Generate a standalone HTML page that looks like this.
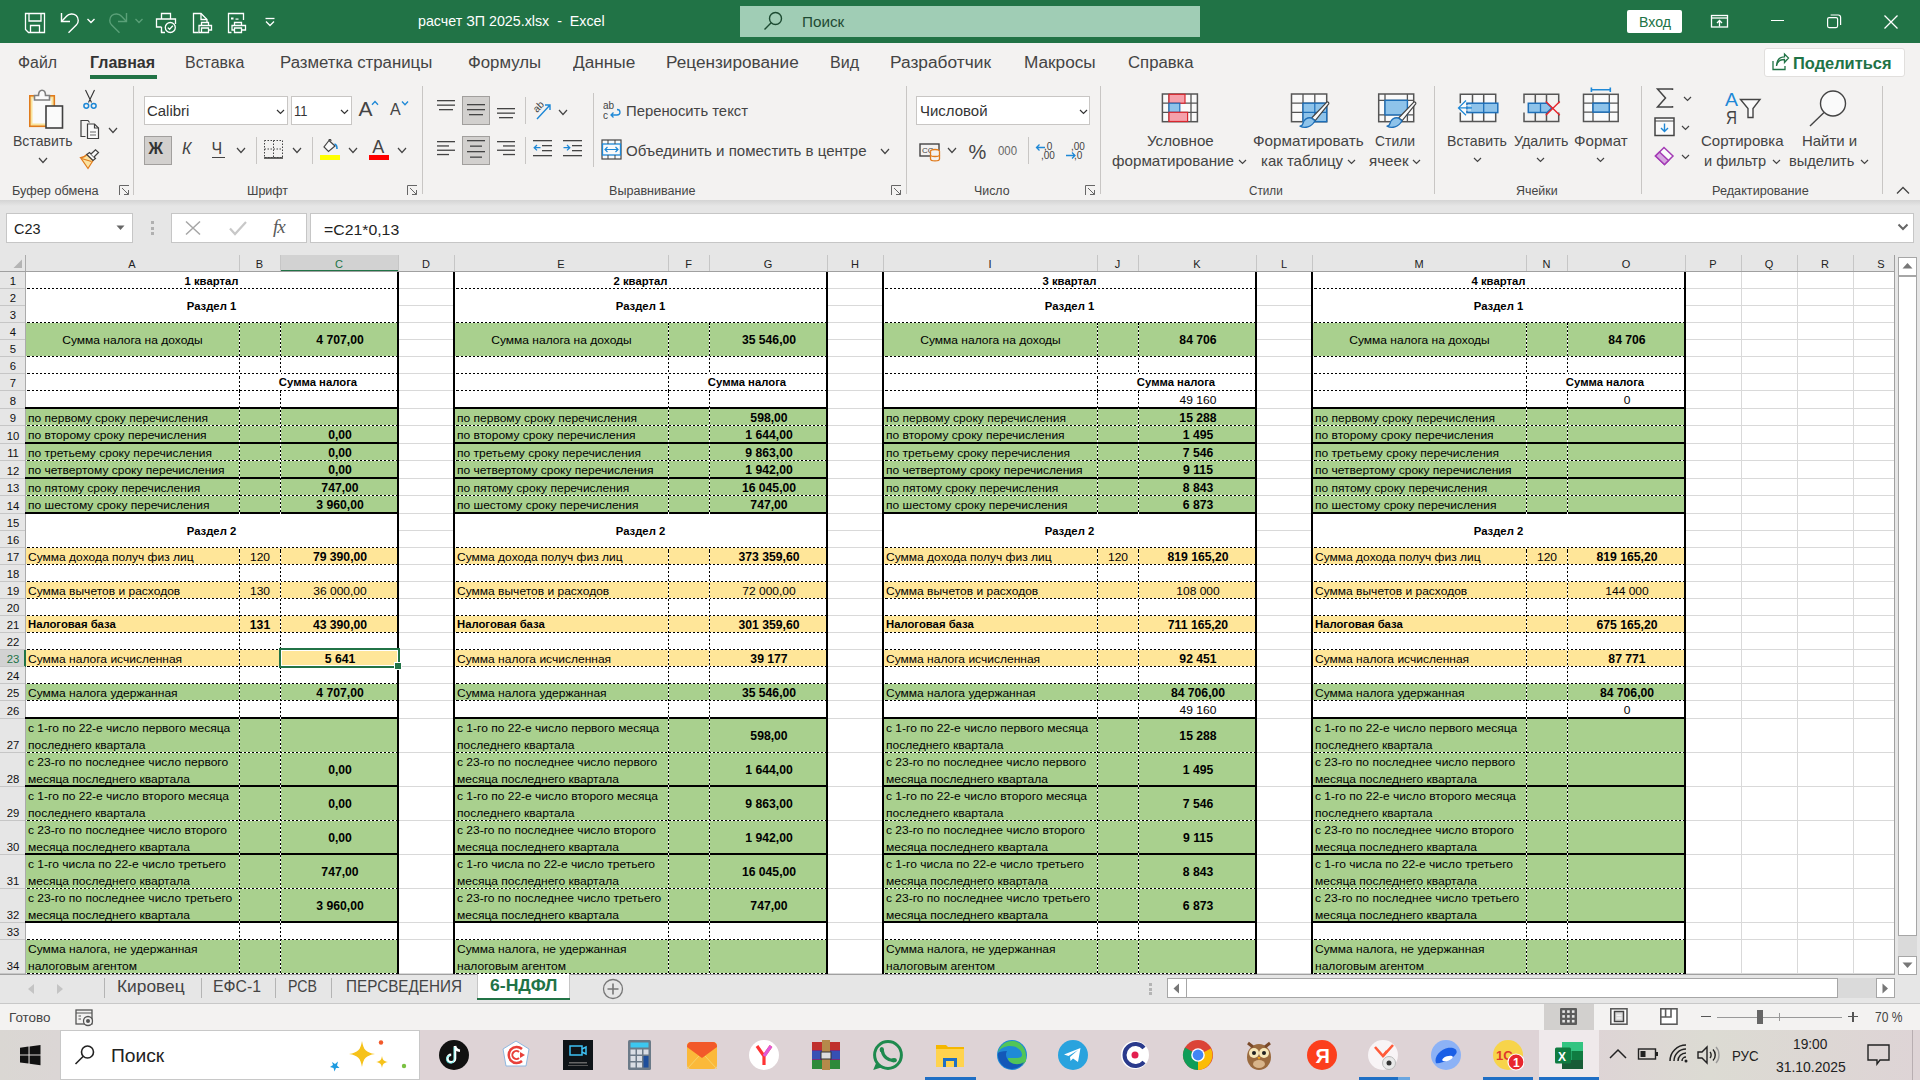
<!DOCTYPE html><html><head><meta charset="utf-8"><style>html,body{margin:0;padding:0;width:1920px;height:1080px;overflow:hidden;background:#e6e6e6;}body{font-family:"Liberation Sans", sans-serif;position:relative;}div,svg{position:absolute;box-sizing:border-box;}.dh{background:repeating-linear-gradient(90deg,#000 0 2px,#fff 2px 4px);background-position:2px 0;}.dv{background:repeating-linear-gradient(180deg,#000 0 2px,#fff 2px 4px);background-position:0 3px;}</style></head><body><div style="left:0px;top:0px;width:1920px;height:43px;background:#217346;"></div><svg style="left:24px;top:12px;" width="22" height="22" viewBox="0 0 22 22"><g fill="none" stroke="#fff" stroke-width="1.3"><path d="M1.5 1.5 H20.5 V20.5 H4.5 L1.5 17.5 Z"/><path d="M5 1.5 V9 H17 V1.5"/><path d="M6.5 20.5 V13.5 H15.5 V20.5"/></g></svg><svg style="left:58px;top:11px;" width="24" height="24" viewBox="0 0 24 24"><g fill="none" stroke="#fff" stroke-width="1.4"><path d="M3.5 2 V10.5 H12"/><path d="M3.8 10.2 L8.5 5.2 C11 2.5 15.5 2.2 18.2 4.6 C21 7.2 20.8 11.6 18.3 14.1 L10.5 21.8"/></g></svg><svg style="left:86px;top:17px;" width="10" height="8" viewBox="0 0 10 8"><path d="M1.5 2 L5 5.5 L8.5 2" fill="none" stroke="#fff" stroke-width="1.4"/></svg><svg style="left:106px;top:11px;" width="24" height="24" viewBox="0 0 24 24"><g fill="none" stroke="#5aa078" stroke-width="1.4"><path d="M20.5 2 V10.5 H12"/><path d="M20.2 10.2 L15.5 5.2 C13 2.5 8.5 2.2 5.8 4.6 C3 7.2 3.2 11.6 5.7 14.1 L13.5 21.8"/></g></svg><svg style="left:134px;top:17px;" width="10" height="8" viewBox="0 0 10 8"><path d="M1.5 2 L5 5.5 L8.5 2" fill="none" stroke="#5aa078" stroke-width="1.4"/></svg><svg style="left:154px;top:11px;" width="24" height="24" viewBox="0 0 24 24"><g fill="none" stroke="#fff" stroke-width="1.3"><path d="M7.5 8 V2.5 H16.5 V8"/><path d="M7.5 21.5 V19 M7.5 16 H2.5 V8 H21.5 V13"/><path d="M7.5 16 V21.5 H11"/><circle cx="16.3" cy="16.5" r="5"/><path d="M13.8 16.6 L15.6 18.3 L18.8 14.8"/></g></svg><svg style="left:191px;top:11px;" width="24" height="24" viewBox="0 0 24 24"><g fill="none" stroke="#fff" stroke-width="1.3"><path d="M7.5 21.5 H2.5 V2.5 H10 L16 8.5 V11"/><path d="M10 2.5 V8.5 H16"/><path d="M10.5 14.5 V11.5 H17.5 V14.5 M10.5 21.5 H8 V14.5 H20.5 V19 H17.5 M10.5 17 V21.5 H17.5 V17 Z"/></g></svg><svg style="left:226px;top:11px;" width="24" height="24" viewBox="0 0 24 24"><g fill="none" stroke="#fff" stroke-width="1.3"><path d="M5.5 21.5 H2.5 V2.5 H17.5 V9"/><rect x="5" y="6.5" width="2.5" height="2" fill="#fff" stroke="none"/><rect x="9.5" y="7.5" width="3" height="1.2" fill="#fff" stroke="none"/><path d="M8.5 14.5 V11.5 H15.5 V14.5 M8.5 19 H6 V14.5 H19.5 V19 H16 M8.5 17 V21.5 H15.5 V17 Z"/></g></svg><svg style="left:263px;top:14px;" width="14" height="14" viewBox="0 0 14 14"><g fill="none" stroke="#fff" stroke-width="1.3"><path d="M2.5 4.5 H11.5"/><path d="M3 7.5 L7 11.5 L11 7.5"/></g></svg><div style="left:418.3px;top:12.80px;font-size:15px;line-height:15px;font-weight:400;color:#fff;white-space:pre;transform:scaleX(0.9504);transform-origin:left;">расчет ЗП 2025.xlsx  -  Excel</div><div style="left:740px;top:6px;width:460px;height:31px;background:#a0cdb5;"></div><svg style="left:760px;top:9px;" width="26" height="26" viewBox="0 0 26 26"><g fill="none" stroke="#1d4b32" stroke-width="1.4"><circle cx="15.5" cy="9.5" r="6"/><path d="M11.2 13.8 L4.5 20.5"/></g></svg><div style="left:801.7px;top:14.30px;font-size:15px;line-height:15px;font-weight:400;color:#1f4a33;white-space:pre;transform:scaleX(1.0174);transform-origin:left;">Поиск</div><div style="left:1627px;top:10px;width:55px;height:23px;background:#fff;border-radius:2px;"></div><div style="left:1638.8px;top:13.90px;font-size:15px;line-height:15px;font-weight:400;color:#217346;white-space:pre;transform:scaleX(0.9429);transform-origin:left;">Вход</div><svg style="left:1709px;top:13px;" width="22" height="16" viewBox="0 0 22 16"><g fill="none" stroke="#fff" stroke-width="1.3"><rect x="2.5" y="2.5" width="16" height="11.5"/><path d="M2.5 5 H18.5"/><path d="M10.5 13.5 V7.5 M8 10 L10.5 7.5 L13 10"/></g></svg><div style="left:1771px;top:19.5px;width:12.5px;height:1.3px;background:#fff;"></div><svg style="left:1825px;top:12px;" width="18" height="18" viewBox="0 0 18 18"><g fill="none" stroke="#fff" stroke-width="1.2"><rect x="2.6" y="5.6" width="10" height="10" rx="1.5"/><path d="M5.6 3 H13.2 C14.6 3 15.6 4 15.6 5.4 V13"/></g></svg><svg style="left:1882px;top:13px;" width="18" height="18" viewBox="0 0 18 18"><g fill="none" stroke="#fff" stroke-width="1.3"><path d="M2.5 2.5 L15.5 15.5 M15.5 2.5 L2.5 15.5"/></g></svg><div style="left:0px;top:43px;width:1920px;height:157px;background:#f3f2f1;"></div><div style="left:18.3px;top:55.46px;font-size:16px;line-height:16px;font-weight:400;color:#444;white-space:pre;transform:scaleX(0.9913);transform-origin:left;">Файл</div><div style="left:90px;top:55.46px;font-size:16px;line-height:16px;font-weight:700;color:#333;white-space:pre;transform:scaleX(0.9988);transform-origin:left;">Главная</div><div style="left:185px;top:55.46px;font-size:16px;line-height:16px;font-weight:400;color:#444;white-space:pre;transform:scaleX(0.9972);transform-origin:left;">Вставка</div><div style="left:280px;top:55.46px;font-size:16px;line-height:16px;font-weight:400;color:#444;white-space:pre;transform:scaleX(1.0492);transform-origin:left;">Разметка страницы</div><div style="left:467.7px;top:55.46px;font-size:16px;line-height:16px;font-weight:400;color:#444;white-space:pre;transform:scaleX(1.0485);transform-origin:left;">Формулы</div><div style="left:572.7px;top:55.46px;font-size:16px;line-height:16px;font-weight:400;color:#444;white-space:pre;transform:scaleX(1.0776);transform-origin:left;">Данные</div><div style="left:666px;top:55.46px;font-size:16px;line-height:16px;font-weight:400;color:#444;white-space:pre;transform:scaleX(1.0741);transform-origin:left;">Рецензирование</div><div style="left:830px;top:55.46px;font-size:16px;line-height:16px;font-weight:400;color:#444;white-space:pre;transform:scaleX(1.0016);transform-origin:left;">Вид</div><div style="left:890px;top:55.46px;font-size:16px;line-height:16px;font-weight:400;color:#444;white-space:pre;transform:scaleX(1.0824);transform-origin:left;">Разработчик</div><div style="left:1024px;top:55.46px;font-size:16px;line-height:16px;font-weight:400;color:#444;white-space:pre;transform:scaleX(1.0749);transform-origin:left;">Макросы</div><div style="left:1127.7px;top:55.46px;font-size:16px;line-height:16px;font-weight:400;color:#444;white-space:pre;transform:scaleX(1.0452);transform-origin:left;">Справка</div><div style="left:90px;top:75px;width:67px;height:4px;background:#217346;"></div><div style="left:1764px;top:48px;width:141px;height:29px;background:#fff;border:1px solid #e1dfdd;border-radius:3px;"></div><svg style="left:1770px;top:52px;" width="20" height="20" viewBox="0 0 20 20"><g fill="none" stroke="#217346" stroke-width="1.3"><path d="M3 9 V17.5 H15 V14"/><path d="M6.5 14 C7 9.5 10 7.5 14.5 7.5 V10.5 L18.5 6 L14.5 2 V4.8 C9 4.8 6.8 8.5 6.5 14"/></g></svg><div style="left:1793.4px;top:54.53px;font-size:16.5px;line-height:16.5px;font-weight:700;color:#217346;white-space:pre;transform:scaleX(0.9956);transform-origin:left;">Поделиться</div><div style="left:133px;top:86px;width:1px;height:109px;background:#c8c6c4;"></div><div style="left:422px;top:86px;width:1px;height:108px;background:#c8c6c4;"></div><div style="left:905.5px;top:86px;width:1px;height:108px;background:#c8c6c4;"></div><div style="left:1099.5px;top:86px;width:1px;height:108px;background:#c8c6c4;"></div><div style="left:1434px;top:86px;width:1px;height:108px;background:#c8c6c4;"></div><div style="left:1641px;top:86px;width:1px;height:108px;background:#c8c6c4;"></div><div style="left:1881.5px;top:86px;width:1px;height:108px;background:#c8c6c4;"></div><div style="left:12px;top:185.42px;font-size:12.5px;line-height:12.5px;font-weight:400;color:#444;white-space:pre;transform:scaleX(1.0184);transform-origin:left;">Буфер обмена</div><svg style="left:119px;top:185px;" width="11" height="11" viewBox="0 0 11 11"><g fill="none" stroke="#666" stroke-width="1"><path d="M0.5 10 V0.5 H10"/><path d="M3 3 L9.5 9.5 M5 9.5 H9.5 V5"/></g></svg><div style="left:246.8px;top:185.42px;font-size:12.5px;line-height:12.5px;font-weight:400;color:#444;white-space:pre;transform:scaleX(0.9966);transform-origin:left;">Шрифт</div><svg style="left:407px;top:185px;" width="11" height="11" viewBox="0 0 11 11"><g fill="none" stroke="#666" stroke-width="1"><path d="M0.5 10 V0.5 H10"/><path d="M3 3 L9.5 9.5 M5 9.5 H9.5 V5"/></g></svg><div style="left:609px;top:185.42px;font-size:12.5px;line-height:12.5px;font-weight:400;color:#444;white-space:pre;transform:scaleX(1.0064);transform-origin:left;">Выравнивание</div><svg style="left:891px;top:185px;" width="11" height="11" viewBox="0 0 11 11"><g fill="none" stroke="#666" stroke-width="1"><path d="M0.5 10 V0.5 H10"/><path d="M3 3 L9.5 9.5 M5 9.5 H9.5 V5"/></g></svg><div style="left:973.7px;top:185.42px;font-size:12.5px;line-height:12.5px;font-weight:400;color:#444;white-space:pre;transform:scaleX(0.9902);transform-origin:left;">Число</div><svg style="left:1085px;top:185px;" width="11" height="11" viewBox="0 0 11 11"><g fill="none" stroke="#666" stroke-width="1"><path d="M0.5 10 V0.5 H10"/><path d="M3 3 L9.5 9.5 M5 9.5 H9.5 V5"/></g></svg><div style="left:1249px;top:185.42px;font-size:12.5px;line-height:12.5px;font-weight:400;color:#444;white-space:pre;transform:scaleX(0.9357);transform-origin:left;">Стили</div><div style="left:1516px;top:185.42px;font-size:12.5px;line-height:12.5px;font-weight:400;color:#444;white-space:pre;transform:scaleX(0.9920);transform-origin:left;">Ячейки</div><div style="left:1712px;top:185.42px;font-size:12.5px;line-height:12.5px;font-weight:400;color:#444;white-space:pre;transform:scaleX(1.0154);transform-origin:left;">Редактирование</div><svg style="left:1896px;top:186px;" width="14" height="9" viewBox="0 0 14 9"><path d="M1 7.5 L7 1.5 L13 7.5" fill="none" stroke="#444" stroke-width="1.3"/></svg><svg style="left:28px;top:89px;" width="36" height="40" viewBox="0 0 36 40"><g stroke-width="1.6"><rect x="1.8" y="6.8" width="24.5" height="30.5" fill="#f9e39b" stroke="#e07b1c"/><rect x="4.5" y="9.5" width="19" height="25" fill="#fafafa" stroke="none"/><path d="M6.5 11 V6.5 H10.5 C10.5 3 12 1.3 14 1.3 C16 1.3 17.5 3 17.5 6.5 H21.5 V11 Z" fill="#fafafa" stroke="#7f7f7f"/><rect x="18" y="17" width="16.5" height="22" fill="#fafafa" stroke="#404040"/></g></svg><div style="left:13px;top:133.10px;font-size:15px;line-height:15px;font-weight:400;color:#444;white-space:pre;transform:scaleX(0.9356);transform-origin:left;">Вставить</div><svg style="left:37.7px;top:156.5px;" width="10" height="7" viewBox="0 0 10 7"><path d="M1 1 L5.0 5.5 L9 1" fill="none" stroke="#444" stroke-width="1.2"/></svg><svg style="left:82px;top:89px;" width="16" height="22" viewBox="0 0 16 22"><g fill="none" stroke-width="1.1"><path d="M3.5 1 L9.5 13.5 M12.5 1 L6.5 13.5" stroke="#333"/><circle cx="4.3" cy="16.8" r="2.4" stroke="#1e88d6" stroke-width="1.5"/><circle cx="11.7" cy="16.8" r="2.4" stroke="#1e88d6" stroke-width="1.5"/></g></svg><svg style="left:79px;top:119px;" width="22" height="22" viewBox="0 0 22 22"><g fill="none" stroke="#404040" stroke-width="1.2"><path d="M6.5 17.5 H2 V1.5 H9 L10.5 3.5"/><path d="M8.5 19.5 V5 H15.5 L19.5 9 V19.5 Z" fill="#fafafa"/><path d="M15.5 5 V9 H19.5"/><path d="M11 13 H17 M11 16 H17" stroke="#666"/></g></svg><svg style="left:107.7px;top:127.30000000000001px;" width="10" height="7" viewBox="0 0 10 7"><path d="M1 1 L5.0 5.5 L9 1" fill="none" stroke="#444" stroke-width="1.2"/></svg><svg style="left:79px;top:149px;" width="22" height="21" viewBox="0 0 22 21"><g stroke-width="1.2"><path d="M1.5 8.5 C4 8.5 6.5 7 7.8 5.5 L14 11.5 L9 19.5 Z" fill="#fbe3a1" stroke="#e07b1c"/><path d="M2.5 9.5 L12.5 12.5" stroke="#e07b1c"/><path d="M7.8 5.5 L10.5 3.5 L16.5 9.5 L14 11.5 Z" fill="#fafafa" stroke="#404040"/><path d="M12 5 L16.5 0.8 L19.5 3.5 L15 8" fill="#fafafa" stroke="#404040"/></g></svg><div style="left:144px;top:96px;width:144px;height:29px;background:#fff;border:1px solid #c8c6c4;"></div><div style="left:147.3px;top:102.88px;font-size:15.5px;line-height:15.5px;font-weight:400;color:#333;white-space:pre;transform:scaleX(0.9627);transform-origin:left;">Calibri</div><svg style="left:276px;top:108.5px;" width="9" height="6" viewBox="0 0 9 6"><path d="M1 1 L4.5 4.5 L8 1" fill="none" stroke="#333" stroke-width="1.2"/></svg><div style="left:290.5px;top:96px;width:61.5px;height:29px;background:#fff;border:1px solid #c8c6c4;"></div><div style="left:294.3px;top:102.88px;font-size:15.5px;line-height:15.5px;font-weight:400;color:#333;white-space:pre;transform:scaleX(0.8326);transform-origin:left;">11</div><svg style="left:340px;top:108.5px;" width="9" height="6" viewBox="0 0 9 6"><path d="M1 1 L4.5 4.5 L8 1" fill="none" stroke="#333" stroke-width="1.2"/></svg><div style="left:358.5px;top:98.22px;font-size:21px;line-height:21px;font-weight:400;color:#444;white-space:pre;">A</div><svg style="left:371px;top:100px;" width="8" height="6" viewBox="0 0 8 6"><path d="M1 4.8 L4 1.5 L7 4.8" fill="none" stroke="#1e88d6" stroke-width="1.3"/></svg><div style="left:390px;top:102.46px;font-size:16px;line-height:16px;font-weight:400;color:#444;white-space:pre;">A</div><svg style="left:401px;top:100px;" width="8" height="6" viewBox="0 0 8 6"><path d="M1 1.5 L4 4.8 L7 1.5" fill="none" stroke="#1e88d6" stroke-width="1.3"/></svg><div style="left:144px;top:136px;width:28px;height:29px;background:#d2d0ce;border:1px solid #a19f9d;"></div><div style="left:148.5px;top:140.96px;font-size:16px;line-height:16px;font-weight:700;color:#333;white-space:pre;">Ж</div><div style="left:182px;top:140.96px;font-size:16px;line-height:16px;font-weight:400;color:#444;white-space:pre;font-style:italic;">К</div><div style="left:211.5px;top:140.96px;font-size:16px;line-height:16px;font-weight:400;color:#444;white-space:pre;">Ч</div><div style="left:211.5px;top:156.5px;width:13px;height:1.3px;background:#444;"></div><svg style="left:236px;top:147.3px;" width="10" height="7" viewBox="0 0 10 7"><path d="M1 1 L5.0 5.5 L9 1" fill="none" stroke="#444" stroke-width="1.2"/></svg><div style="left:255.5px;top:137px;width:1px;height:27px;background:#c8c6c4;"></div><svg style="left:263px;top:139px;" width="21" height="21" viewBox="0 0 21 21"><g fill="none" stroke="#444" stroke-width="1" stroke-dasharray="1.5 1.5"><rect x="1.5" y="1.5" width="18" height="17"/><path d="M10.5 1.5 V18 M1.5 10 H19.5"/></g><path d="M1 19 H20" stroke="#444" stroke-width="1.6"/></svg><svg style="left:291.8px;top:147.3px;" width="10" height="7" viewBox="0 0 10 7"><path d="M1 1 L5.0 5.5 L9 1" fill="none" stroke="#444" stroke-width="1.2"/></svg><div style="left:311.5px;top:137px;width:1px;height:27px;background:#c8c6c4;"></div><svg style="left:320px;top:139px;" width="21" height="16" viewBox="0 0 21 16"><g fill="none" stroke="#444" stroke-width="1.2"><path d="M9 1.5 L4 8 L8.5 12.5 L15 7 Z" fill="#fafafa"/><path d="M9 1.5 C9 0 11 0 11 2"/></g><path d="M14.5 5 C16.5 5.5 17 7.5 17 10" fill="none" stroke="#1e88d6" stroke-width="1.6"/></svg><div style="left:319.8px;top:155px;width:20px;height:5px;background:#ffff00;"></div><svg style="left:347.8px;top:147.3px;" width="10" height="7" viewBox="0 0 10 7"><path d="M1 1 L5.0 5.5 L9 1" fill="none" stroke="#444" stroke-width="1.2"/></svg><div style="left:372.3px;top:138.46px;font-size:18px;line-height:18px;font-weight:400;color:#444;white-space:pre;">A</div><div style="left:369px;top:155px;width:20px;height:5px;background:#ff0000;"></div><svg style="left:396.8px;top:147.3px;" width="10" height="7" viewBox="0 0 10 7"><path d="M1 1 L5.0 5.5 L9 1" fill="none" stroke="#444" stroke-width="1.2"/></svg><div style="left:462px;top:96px;width:28px;height:29px;background:#d2d0ce;border:1px solid #a19f9d;"></div><div style="left:462px;top:136px;width:28px;height:29px;background:#d2d0ce;border:1px solid #a19f9d;"></div><svg style="left:437px;top:100px;" width="18" height="13.5" viewBox="0 0 18 13.5"><rect x="0.0" y="0.0" width="18" height="1.3" fill="#444"/><rect x="0.0" y="4.5" width="18" height="1.3" fill="#444"/><rect x="2.0" y="9.0" width="14" height="1.3" fill="#444"/></svg><svg style="left:467px;top:104px;" width="18" height="15" viewBox="0 0 18 15"><rect x="0.0" y="0" width="18" height="1.3" fill="#444"/><rect x="0.0" y="5" width="18" height="1.3" fill="#444"/><rect x="2.0" y="10" width="14" height="1.3" fill="#444"/></svg><svg style="left:497px;top:108px;" width="18" height="13.5" viewBox="0 0 18 13.5"><rect x="0.0" y="0.0" width="18" height="1.3" fill="#444"/><rect x="0.0" y="4.5" width="18" height="1.3" fill="#444"/><rect x="2.0" y="9.0" width="14" height="1.3" fill="#444"/></svg><div style="left:524.5px;top:97px;width:1px;height:27px;background:#c8c6c4;"></div><svg style="left:531px;top:99px;" width="24" height="22" viewBox="0 0 24 22"><text x="3" y="11" font-size="10" font-family="Liberation Sans" fill="#444" transform="rotate(-45 8 9)">ab</text><path d="M6 20 L19 6 M14 6 H19 V11" fill="none" stroke="#1e88d6" stroke-width="1.4"/></svg><svg style="left:558px;top:109px;" width="10" height="7" viewBox="0 0 10 7"><path d="M1 1 L5.0 5.5 L9 1" fill="none" stroke="#444" stroke-width="1.2"/></svg><div style="left:592.5px;top:93px;width:1px;height:74px;background:#c8c6c4;"></div><svg style="left:603px;top:100px;" width="20" height="21" viewBox="0 0 20 21"><text x="0" y="9" font-size="10" font-family="Liberation Sans" fill="#444">ab</text><text x="0" y="19" font-size="10" font-family="Liberation Sans" fill="#444">c</text><path d="M8 15 H14 C18 15 18 9.5 14 9.5 M10.5 12.5 L8 15 L10.5 17.5" fill="none" stroke="#1e88d6" stroke-width="1.3"/></svg><div style="left:626px;top:103.30px;font-size:15px;line-height:15px;font-weight:400;color:#444;white-space:pre;transform:scaleX(0.9894);transform-origin:left;">Переносить текст</div><svg style="left:437px;top:141px;" width="18" height="17.2" viewBox="0 0 18 17.2"><rect x="0" y="0.0" width="18" height="1.3" fill="#444"/><rect x="0" y="4.3" width="12" height="1.3" fill="#444"/><rect x="0" y="8.6" width="18" height="1.3" fill="#444"/><rect x="0" y="12.899999999999999" width="12" height="1.3" fill="#444"/></svg><svg style="left:467px;top:140px;" width="18" height="22.0" viewBox="0 0 18 22.0"><rect x="0.0" y="0.0" width="18" height="1.3" fill="#444"/><rect x="3.0" y="5.5" width="12" height="1.3" fill="#444"/><rect x="0.0" y="11.0" width="18" height="1.3" fill="#444"/><rect x="3.0" y="16.5" width="12" height="1.3" fill="#444"/></svg><svg style="left:497px;top:141px;" width="18" height="17.2" viewBox="0 0 18 17.2"><rect x="0" y="0.0" width="18" height="1.3" fill="#444"/><rect x="6" y="4.3" width="12" height="1.3" fill="#444"/><rect x="0" y="8.6" width="18" height="1.3" fill="#444"/><rect x="6" y="12.899999999999999" width="12" height="1.3" fill="#444"/></svg><div style="left:524.5px;top:137px;width:1px;height:27px;background:#c8c6c4;"></div><svg style="left:533px;top:139px;" width="20" height="19" viewBox="0 0 20 19"><g fill="#444"><rect x="0" y="1" width="19" height="1.3"/><rect x="9" y="6" width="10" height="1.3"/><rect x="9" y="11" width="10" height="1.3"/><rect x="0" y="16" width="19" height="1.3"/></g><path d="M1.5 8.7 H7.5 M4 6 L1.2 8.7 L4 11.4" fill="none" stroke="#1e88d6" stroke-width="1.3"/></svg><svg style="left:563px;top:139px;" width="20" height="19" viewBox="0 0 20 19"><g fill="#444"><rect x="0" y="1" width="19" height="1.3"/><rect x="9" y="6" width="10" height="1.3"/><rect x="9" y="11" width="10" height="1.3"/><rect x="0" y="16" width="19" height="1.3"/></g><path d="M0.5 8.7 H6.5 M4 6 L6.8 8.7 L4 11.4" fill="none" stroke="#1e88d6" stroke-width="1.3"/></svg><svg style="left:601px;top:139px;" width="21" height="21" viewBox="0 0 21 21"><rect x="1" y="1" width="19" height="19" fill="#fafafa" stroke="#444" stroke-width="1.2"/><rect x="1.5" y="5" width="18" height="11" fill="#fafafa" stroke="#1e88d6" stroke-width="1.3"/><path d="M4 10.5 H17 M6.5 8 L4 10.5 L6.5 13 M14.5 8 L17 10.5 L14.5 13" fill="none" stroke="#1e88d6" stroke-width="1.2"/><path d="M7 1 V5 M14 1 V5 M7 16 V20 M14 16 V20" stroke="#444"/></svg><div style="left:626px;top:143.30px;font-size:15px;line-height:15px;font-weight:400;color:#444;white-space:pre;transform:scaleX(1.0029);transform-origin:left;">Объединить и поместить в центре</div><svg style="left:880px;top:148px;" width="10" height="7" viewBox="0 0 10 7"><path d="M1 1 L5.0 5.5 L9 1" fill="none" stroke="#444" stroke-width="1.2"/></svg><div style="left:916px;top:96px;width:174px;height:29px;background:#fff;border:1px solid #c8c6c4;"></div><div style="left:919.7px;top:102.88px;font-size:15.5px;line-height:15.5px;font-weight:400;color:#333;white-space:pre;transform:scaleX(0.9654);transform-origin:left;">Числовой</div><svg style="left:1079px;top:108.5px;" width="9" height="6" viewBox="0 0 9 6"><path d="M1 1 L4.5 4.5 L8 1" fill="none" stroke="#333" stroke-width="1.2"/></svg><svg style="left:919px;top:142px;" width="24" height="20" viewBox="0 0 24 20"><rect x="1" y="2" width="19" height="12" fill="none" stroke="#444" stroke-width="1.4"/><text x="3" y="11" font-size="8" font-family="Liberation Sans" fill="#444">CC</text><g fill="#f3f2f1" stroke="#e07b1c" stroke-width="1.3"><ellipse cx="16" cy="9.5" rx="4.5" ry="2"/><path d="M11.5 9.5 V17 C11.5 19.5 20.5 19.5 20.5 17 V9.5"/><path d="M11.5 13 C11.5 15 20.5 15 20.5 13"/></g></svg><svg style="left:947px;top:147.3px;" width="10" height="7" viewBox="0 0 10 7"><path d="M1 1 L5.0 5.5 L9 1" fill="none" stroke="#444" stroke-width="1.2"/></svg><div style="left:968.5px;top:142.07px;font-size:20px;line-height:20px;font-weight:400;color:#444;white-space:pre;">%</div><div style="left:998px;top:144.84px;font-size:12px;line-height:12px;font-weight:400;color:#666;white-space:pre;transform:scaleX(0.95);transform-origin:left;">000</div><div style="left:1027.5px;top:137px;width:1px;height:27px;background:#c8c6c4;"></div><svg style="left:1035px;top:141px;" width="22" height="20" viewBox="0 0 22 20"><text x="9" y="9" font-size="10" font-family="Liberation Sans" fill="#444">,0</text><text x="6" y="18" font-size="10" font-family="Liberation Sans" fill="#444">,00</text><path d="M1.5 6.5 H10 M4.5 3.5 L1.5 6.5 L4.5 9.5" fill="none" stroke="#1e88d6" stroke-width="1.3"/></svg><svg style="left:1065px;top:141px;" width="22" height="20" viewBox="0 0 22 20"><text x="6" y="9" font-size="10" font-family="Liberation Sans" fill="#444">,00</text><text x="9" y="18" font-size="10" font-family="Liberation Sans" fill="#444">,0</text><path d="M1 14.5 H10 M7 11.5 L10 14.5 L7 17.5" fill="none" stroke="#1e88d6" stroke-width="1.3"/></svg><svg style="left:1161px;top:93px;" width="38" height="30" viewBox="0 0 38 30"><rect x="1.4" y="1" width="35" height="27.7" fill="#fafafa" stroke="#555" stroke-width="1.5"/><path d="M8 1 V28.7 M30 1 V28.7 M1.4 10.2 H36.4 M1.4 19.3 H36.4" stroke="#555" stroke-width="1.3" fill="none"/><rect x="8" y="1.3" width="16" height="8.9" fill="#f5a0aa" stroke="#d9262e" stroke-width="1.2"/><rect x="8" y="10.2" width="10.8" height="9.1" fill="#8ec3ea" stroke="#1e6fb8" stroke-width="1.2"/><rect x="8" y="19.3" width="18.6" height="9.2" fill="#f5a0aa" stroke="#d9262e" stroke-width="1.2"/></svg><div style="left:1147px;top:133.30px;font-size:15px;line-height:15px;font-weight:400;color:#444;white-space:pre;transform:scaleX(1.0070);transform-origin:left;">Условное</div><div style="left:1112px;top:153.30px;font-size:15px;line-height:15px;font-weight:400;color:#444;white-space:pre;transform:scaleX(1.0130);transform-origin:left;">форматирование</div><svg style="left:1238px;top:159px;" width="9" height="6" viewBox="0 0 9 6"><path d="M1 1 L4.5 4.5 L8 1" fill="none" stroke="#444" stroke-width="1.2"/></svg><svg style="left:1290px;top:92px;" width="42" height="38" viewBox="0 0 42 38"><rect x="1.5" y="2" width="35.2" height="27.7" fill="#fafafa" stroke="#555" stroke-width="1.5"/><path d="M13 2 V29.7 M24.8 2 V29.7 M1.5 11.2 H36.7 M1.5 20.3 H36.7" stroke="#555" stroke-width="1.3"/><rect x="13" y="11.2" width="23.7" height="18.5" fill="#8ec3ea" stroke="#1e6fb8" stroke-width="1.4"/><path d="M24.8 11.2 V29.7 M13 20.3 H36.7" stroke="#1e6fb8" stroke-width="1.2"/><path d="M36.6 10.3 C37.6 9.3 39.5 10.6 38.7 11.9 L25.2 28.6 L21.6 26 Z" fill="#fafafa" stroke="#444" stroke-width="1.2" stroke-linejoin="round"/><path d="M21.4 26 C17.5 25 13.6 27.5 13 31.5 C12.6 33.3 11.4 34 10 34.2 C14.5 36.6 21.5 35.5 25 28.8 Z" fill="#8ec3ea" stroke="#1e6fb8" stroke-width="1.3" stroke-linejoin="round"/></svg><svg style="left:1377px;top:92px;" width="42" height="38" viewBox="0 0 42 38"><rect x="1.7" y="2" width="35" height="27.7" fill="#fafafa" stroke="#555" stroke-width="1.5"/><path d="M8 2 V29.7 M30.4 2 V29.7 M1.7 8.3 H36.7 M1.7 22.9 H36.7" stroke="#555" stroke-width="1.3"/><rect x="8" y="8.3" width="22.4" height="14.6" fill="#8ec3ea" stroke="#1e6fb8" stroke-width="1.4"/><path d="M36.6 10.3 C37.6 9.3 39.5 10.6 38.7 11.9 L25.2 28.6 L21.6 26 Z" fill="#fafafa" stroke="#444" stroke-width="1.2" stroke-linejoin="round"/><path d="M21.4 26 C17.5 25 13.6 27.5 13 31.5 C12.6 33.3 11.4 34 10 34.2 C14.5 36.6 21.5 35.5 25 28.8 Z" fill="#8ec3ea" stroke="#1e6fb8" stroke-width="1.3" stroke-linejoin="round"/></svg><div style="left:1253px;top:133.30px;font-size:15px;line-height:15px;font-weight:400;color:#444;white-space:pre;transform:scaleX(1.0160);transform-origin:left;">Форматировать</div><div style="left:1261px;top:153.30px;font-size:15px;line-height:15px;font-weight:400;color:#444;white-space:pre;transform:scaleX(0.9981);transform-origin:left;">как таблицу</div><svg style="left:1347px;top:159px;" width="9" height="6" viewBox="0 0 9 6"><path d="M1 1 L4.5 4.5 L8 1" fill="none" stroke="#444" stroke-width="1.2"/></svg><div style="left:1375px;top:133.30px;font-size:15px;line-height:15px;font-weight:400;color:#444;white-space:pre;transform:scaleX(0.9255);transform-origin:left;">Стили</div><div style="left:1369px;top:153.30px;font-size:15px;line-height:15px;font-weight:400;color:#444;white-space:pre;transform:scaleX(1.0080);transform-origin:left;">ячеек</div><svg style="left:1412px;top:159px;" width="9" height="6" viewBox="0 0 9 6"><path d="M1 1 L4.5 4.5 L8 1" fill="none" stroke="#444" stroke-width="1.2"/></svg><svg style="left:1456px;top:88px;" width="44" height="36" viewBox="0 0 44 36"><path d="M4.3 15.2 V6.3 H39.7 V33.5 H4.3 V24.6 M16.5 6.3 V33.5 M27.7 6.3 V33.5" fill="#fafafa" stroke="#555" stroke-width="1.5"/><path d="M4.3 6.3 H39.7 V33.5 H4.3 Z" fill="#fafafa" stroke="none" opacity="0"/><rect x="10.9" y="15.2" width="30.9" height="9.4" fill="#8ec3ea" stroke="#1e6fb8" stroke-width="1.5"/><path d="M27.7 15.2 V24.6" stroke="#1e6fb8" stroke-width="1.3"/><path d="M10 12.5 L2.5 19.9 L10 27.3 M2.8 19.9 H16" fill="none" stroke="#1e88d6" stroke-width="1.3"/><path d="M6 17.8 H15 M6 22 H15" stroke="#fafafa" stroke-width="0.9"/></svg><svg style="left:1522px;top:88px;" width="40" height="36" viewBox="0 0 40 36"><path d="M2 15.2 V6.3 H36.7 V15.2 M36.7 24.6 V33.5 H2 V24.6 M13.3 6.3 V33.5 M24.5 6.3 V15.2 M24.5 24.6 V33.5" fill="none" stroke="#555" stroke-width="1.5"/><path d="M6.3 15.2 H25 L30 19.9 L25 24.6 H6.3 Z" fill="#8ec3ea" stroke="#1e6fb8" stroke-width="1.5"/><path d="M18.5 15.2 V24.6" stroke="#1e6fb8" stroke-width="1.3"/><path d="M23.8 13.5 L37.8 27.3 M37.8 13.5 L23.8 27.3" stroke="#e8262d" stroke-width="1.4"/></svg><svg style="left:1581px;top:86px;" width="40" height="38" viewBox="0 0 40 38"><path d="M10 3.8 H29.7 M10.4 1.5 V6 M29.3 1.5 V6" stroke="#1e88d6" stroke-width="1.6"/><rect x="2.5" y="8.3" width="34.7" height="27.2" fill="#fafafa" stroke="#555" stroke-width="1.5"/><path d="M12 8.3 V35.5 M28.3 8.3 V35.5 M2.5 17.2 H37.2 M2.5 26.1 H37.2" stroke="#555" stroke-width="1.3"/><rect x="12" y="17.2" width="16.3" height="8.9" fill="#8ec3ea" stroke="#1e6fb8" stroke-width="1.5"/></svg><div style="left:1447.4px;top:133.30px;font-size:15px;line-height:15px;font-weight:400;color:#444;white-space:pre;transform:scaleX(0.9435);transform-origin:left;">Вставить</div><svg style="left:1473px;top:156.5px;" width="9" height="6" viewBox="0 0 9 6"><path d="M1 1 L4.5 4.5 L8 1" fill="none" stroke="#444" stroke-width="1.2"/></svg><div style="left:1513.5px;top:133.30px;font-size:15px;line-height:15px;font-weight:400;color:#444;white-space:pre;transform:scaleX(0.9514);transform-origin:left;">Удалить</div><svg style="left:1536px;top:156.5px;" width="9" height="6" viewBox="0 0 9 6"><path d="M1 1 L4.5 4.5 L8 1" fill="none" stroke="#444" stroke-width="1.2"/></svg><div style="left:1574px;top:133.30px;font-size:15px;line-height:15px;font-weight:400;color:#444;white-space:pre;transform:scaleX(1.0076);transform-origin:left;">Формат</div><svg style="left:1596px;top:156.5px;" width="9" height="6" viewBox="0 0 9 6"><path d="M1 1 L4.5 4.5 L8 1" fill="none" stroke="#444" stroke-width="1.2"/></svg><svg style="left:1655px;top:87px;" width="20" height="22" viewBox="0 0 20 22"><path d="M17.5 3 V2 H2.5 L10.5 11 L2.5 20 H17.5 V19" fill="none" stroke="#444" stroke-width="1.5" stroke-linejoin="miter"/></svg><svg style="left:1683px;top:95.5px;" width="9" height="6" viewBox="0 0 9 6"><path d="M1 1 L4.5 4.5 L8 1" fill="none" stroke="#444" stroke-width="1.2"/></svg><svg style="left:1654px;top:117px;" width="22" height="20" viewBox="0 0 22 20"><rect x="1" y="1" width="19" height="17.5" fill="#fafafa" stroke="#444" stroke-width="1.5"/><path d="M1 4 H20" stroke="#444" stroke-width="1"/><path d="M10.5 6.5 V14.5 M7 11 L10.5 14.5 L14 11" fill="none" stroke="#1e88d6" stroke-width="1.4"/></svg><svg style="left:1680.5px;top:124.5px;" width="9" height="6" viewBox="0 0 9 6"><path d="M1 1 L4.5 4.5 L8 1" fill="none" stroke="#444" stroke-width="1.2"/></svg><svg style="left:1654px;top:146px;" width="21" height="20" viewBox="0 0 21 20"><path d="M10 1.5 L19 10 L10.5 18.5 L1.5 10 Z" fill="#fafafa" stroke="#a33bb5" stroke-width="1.5"/><path d="M1.5 10 L10.5 18.5 L14.5 14.5 L5.5 6 Z" fill="#d6a6e0" stroke="#a33bb5" stroke-width="1.5"/></svg><svg style="left:1680.5px;top:153.5px;" width="9" height="6" viewBox="0 0 9 6"><path d="M1 1 L4.5 4.5 L8 1" fill="none" stroke="#444" stroke-width="1.2"/></svg><div style="left:1724.5px;top:90.42px;font-size:19px;line-height:19px;font-weight:400;color:#1e88d6;white-space:pre;transform:scaleX(1.0246);transform-origin:left;">A</div><div style="left:1726px;top:108.42px;font-size:19px;line-height:19px;font-weight:400;color:#444;white-space:pre;transform:scaleX(0.8009);transform-origin:left;">Я</div><svg style="left:1739px;top:98px;" width="23" height="22" viewBox="0 0 23 22"><path d="M1.5 1.5 H21 L14 10.5 V19.5 H9 V10.5 Z" fill="#fafafa" stroke="#444" stroke-width="1.4"/></svg><div style="left:1701px;top:133.30px;font-size:15px;line-height:15px;font-weight:400;color:#444;white-space:pre;transform:scaleX(1.0021);transform-origin:left;">Сортировка</div><div style="left:1704px;top:153.30px;font-size:15px;line-height:15px;font-weight:400;color:#444;white-space:pre;transform:scaleX(0.9706);transform-origin:left;">и фильтр</div><svg style="left:1772px;top:159px;" width="9" height="6" viewBox="0 0 9 6"><path d="M1 1 L4.5 4.5 L8 1" fill="none" stroke="#444" stroke-width="1.2"/></svg><svg style="left:1808px;top:88px;" width="40" height="40" viewBox="0 0 40 40"><circle cx="25" cy="15.5" r="12.5" fill="#fafafa" stroke="#444" stroke-width="1.4"/><path d="M16 24.5 L2 38" stroke="#444" stroke-width="1.4"/></svg><div style="left:1801.6px;top:133.30px;font-size:15px;line-height:15px;font-weight:400;color:#444;white-space:pre;transform:scaleX(0.9971);transform-origin:left;">Найти и</div><div style="left:1789px;top:153.30px;font-size:15px;line-height:15px;font-weight:400;color:#444;white-space:pre;transform:scaleX(0.9736);transform-origin:left;">выделить</div><svg style="left:1860px;top:159px;" width="9" height="6" viewBox="0 0 9 6"><path d="M1 1 L4.5 4.5 L8 1" fill="none" stroke="#444" stroke-width="1.2"/></svg><div style="left:0px;top:200px;width:1920px;height:6px;background:linear-gradient(#d4d4d4,#e6e6e6);"></div><div style="left:6px;top:213px;width:127px;height:30px;background:#fff;border:1px solid #c6c6c6;"></div><div style="left:13.5px;top:222.13px;font-size:14.5px;line-height:14.5px;font-weight:400;color:#222;white-space:pre;transform:scaleX(0.9959);transform-origin:left;">C23</div><svg style="left:116px;top:225px;" width="9" height="6" viewBox="0 0 9 6"><path d="M0.5 0.5 H8.5 L4.5 5 Z" fill="#666"/></svg><div style="left:150.5px;top:221px;width:3px;height:3px;background:#b0b0b0;"></div><div style="left:150.5px;top:226.5px;width:3px;height:3px;background:#b0b0b0;"></div><div style="left:150.5px;top:232px;width:3px;height:3px;background:#b0b0b0;"></div><div style="left:170.5px;top:213px;width:136px;height:30px;background:#fff;border:1px solid #c6c6c6;"></div><svg style="left:184px;top:219px;" width="18" height="18" viewBox="0 0 18 18"><path d="M2 2.5 L16 15.5 M16 2.5 L2 15.5" stroke="#a6a6a6" stroke-width="1.5"/></svg><svg style="left:228px;top:220px;" width="20" height="17" viewBox="0 0 20 17"><path d="M2 8.5 L7 14 L18 2" fill="none" stroke="#c8c8c8" stroke-width="2.2"/></svg><div style="left:273px;top:216px;font-family:'Liberation Serif',serif;font-style:italic;font-size:19px;line-height:22px;color:#5a5a5a;letter-spacing:-1px;">fx</div><div style="left:310px;top:213px;width:1604px;height:30px;background:#fff;border:1px solid #c6c6c6;"></div><div style="left:324.4px;top:221.50px;font-size:15px;line-height:15px;font-weight:400;color:#222;white-space:pre;transform:scaleX(1.0545);transform-origin:left;">=C21*0,13</div><svg style="left:1897px;top:223px;" width="12" height="8" viewBox="0 0 12 8"><path d="M1.5 1.5 L6 6 L10.5 1.5" fill="none" stroke="#666" stroke-width="2"/></svg><div style="left:0px;top:255px;width:1895px;height:17px;background:#e6e6e6;"></div><div style="left:0px;top:272px;width:25px;height:702px;background:#e6e6e6;"></div><div style="left:26px;top:272px;width:1869px;height:702px;background:#fff;"></div><div style="left:280px;top:255px;width:118px;height:16px;background:#d2d2d2;"></div><div style="left:280px;top:270px;width:119px;height:2px;background:#217346;"></div><div style="left:25px;top:259.19px;font-size:11px;line-height:11px;font-weight:400;color:#222;white-space:pre;width:214px;text-align:center;">A</div><div style="left:239px;top:255px;width:1px;height:16px;background:#c6c6c6;"></div><div style="left:239px;top:259.19px;font-size:11px;line-height:11px;font-weight:400;color:#222;white-space:pre;width:41px;text-align:center;">B</div><div style="left:280px;top:255px;width:1px;height:16px;background:#c6c6c6;"></div><div style="left:280px;top:259.19px;font-size:11px;line-height:11px;font-weight:400;color:#217346;white-space:pre;width:118px;text-align:center;">C</div><div style="left:398px;top:255px;width:1px;height:16px;background:#c6c6c6;"></div><div style="left:398px;top:259.19px;font-size:11px;line-height:11px;font-weight:400;color:#222;white-space:pre;width:56px;text-align:center;">D</div><div style="left:454px;top:255px;width:1px;height:16px;background:#c6c6c6;"></div><div style="left:454px;top:259.19px;font-size:11px;line-height:11px;font-weight:400;color:#222;white-space:pre;width:214px;text-align:center;">E</div><div style="left:668px;top:255px;width:1px;height:16px;background:#c6c6c6;"></div><div style="left:668px;top:259.19px;font-size:11px;line-height:11px;font-weight:400;color:#222;white-space:pre;width:41px;text-align:center;">F</div><div style="left:709px;top:255px;width:1px;height:16px;background:#c6c6c6;"></div><div style="left:709px;top:259.19px;font-size:11px;line-height:11px;font-weight:400;color:#222;white-space:pre;width:118px;text-align:center;">G</div><div style="left:827px;top:255px;width:1px;height:16px;background:#c6c6c6;"></div><div style="left:827px;top:259.19px;font-size:11px;line-height:11px;font-weight:400;color:#222;white-space:pre;width:56px;text-align:center;">H</div><div style="left:883px;top:255px;width:1px;height:16px;background:#c6c6c6;"></div><div style="left:883px;top:259.19px;font-size:11px;line-height:11px;font-weight:400;color:#222;white-space:pre;width:214px;text-align:center;">I</div><div style="left:1097px;top:255px;width:1px;height:16px;background:#c6c6c6;"></div><div style="left:1097px;top:259.19px;font-size:11px;line-height:11px;font-weight:400;color:#222;white-space:pre;width:41px;text-align:center;">J</div><div style="left:1138px;top:255px;width:1px;height:16px;background:#c6c6c6;"></div><div style="left:1138px;top:259.19px;font-size:11px;line-height:11px;font-weight:400;color:#222;white-space:pre;width:118px;text-align:center;">K</div><div style="left:1256px;top:255px;width:1px;height:16px;background:#c6c6c6;"></div><div style="left:1256px;top:259.19px;font-size:11px;line-height:11px;font-weight:400;color:#222;white-space:pre;width:56px;text-align:center;">L</div><div style="left:1312px;top:255px;width:1px;height:16px;background:#c6c6c6;"></div><div style="left:1312px;top:259.19px;font-size:11px;line-height:11px;font-weight:400;color:#222;white-space:pre;width:214px;text-align:center;">M</div><div style="left:1526px;top:255px;width:1px;height:16px;background:#c6c6c6;"></div><div style="left:1526px;top:259.19px;font-size:11px;line-height:11px;font-weight:400;color:#222;white-space:pre;width:41px;text-align:center;">N</div><div style="left:1567px;top:255px;width:1px;height:16px;background:#c6c6c6;"></div><div style="left:1567px;top:259.19px;font-size:11px;line-height:11px;font-weight:400;color:#222;white-space:pre;width:118px;text-align:center;">O</div><div style="left:1685px;top:255px;width:1px;height:16px;background:#c6c6c6;"></div><div style="left:1685px;top:259.19px;font-size:11px;line-height:11px;font-weight:400;color:#222;white-space:pre;width:56px;text-align:center;">P</div><div style="left:1741px;top:255px;width:1px;height:16px;background:#c6c6c6;"></div><div style="left:1741px;top:259.19px;font-size:11px;line-height:11px;font-weight:400;color:#222;white-space:pre;width:56px;text-align:center;">Q</div><div style="left:1797px;top:255px;width:1px;height:16px;background:#c6c6c6;"></div><div style="left:1797px;top:259.19px;font-size:11px;line-height:11px;font-weight:400;color:#222;white-space:pre;width:56px;text-align:center;">R</div><div style="left:1853px;top:255px;width:1px;height:16px;background:#c6c6c6;"></div><div style="left:1853px;top:259.19px;font-size:11px;line-height:11px;font-weight:400;color:#222;white-space:pre;width:56px;text-align:center;">S</div><svg style="left:13px;top:259px;" width="10" height="10" viewBox="0 0 10 10"><path d="M9 0.5 V9 H0.5 Z" fill="#b4b4b4"/></svg><div style="left:25px;top:255px;width:1px;height:719px;background:#ababab;"></div><div style="left:0px;top:271px;width:1895px;height:1px;background:#a0a0a0;"></div><div style="left:239px;top:272px;width:1px;height:702px;background:#d9d9d9;"></div><div style="left:280px;top:272px;width:1px;height:702px;background:#d9d9d9;"></div><div style="left:398px;top:272px;width:1px;height:702px;background:#d9d9d9;"></div><div style="left:454px;top:272px;width:1px;height:702px;background:#d9d9d9;"></div><div style="left:668px;top:272px;width:1px;height:702px;background:#d9d9d9;"></div><div style="left:709px;top:272px;width:1px;height:702px;background:#d9d9d9;"></div><div style="left:827px;top:272px;width:1px;height:702px;background:#d9d9d9;"></div><div style="left:883px;top:272px;width:1px;height:702px;background:#d9d9d9;"></div><div style="left:1097px;top:272px;width:1px;height:702px;background:#d9d9d9;"></div><div style="left:1138px;top:272px;width:1px;height:702px;background:#d9d9d9;"></div><div style="left:1256px;top:272px;width:1px;height:702px;background:#d9d9d9;"></div><div style="left:1312px;top:272px;width:1px;height:702px;background:#d9d9d9;"></div><div style="left:1526px;top:272px;width:1px;height:702px;background:#d9d9d9;"></div><div style="left:1567px;top:272px;width:1px;height:702px;background:#d9d9d9;"></div><div style="left:1685px;top:272px;width:1px;height:702px;background:#d9d9d9;"></div><div style="left:1741px;top:272px;width:1px;height:702px;background:#d9d9d9;"></div><div style="left:1797px;top:272px;width:1px;height:702px;background:#d9d9d9;"></div><div style="left:1853px;top:272px;width:1px;height:702px;background:#d9d9d9;"></div><div style="left:26px;top:288px;width:1869px;height:1px;background:#d9d9d9;"></div><div style="left:26px;top:305px;width:1869px;height:1px;background:#d9d9d9;"></div><div style="left:26px;top:322px;width:1869px;height:1px;background:#d9d9d9;"></div><div style="left:26px;top:339px;width:1869px;height:1px;background:#d9d9d9;"></div><div style="left:26px;top:356px;width:1869px;height:1px;background:#d9d9d9;"></div><div style="left:26px;top:373px;width:1869px;height:1px;background:#d9d9d9;"></div><div style="left:26px;top:390px;width:1869px;height:1px;background:#d9d9d9;"></div><div style="left:26px;top:408px;width:1869px;height:1px;background:#d9d9d9;"></div><div style="left:26px;top:425px;width:1869px;height:1px;background:#d9d9d9;"></div><div style="left:26px;top:443px;width:1869px;height:1px;background:#d9d9d9;"></div><div style="left:26px;top:460px;width:1869px;height:1px;background:#d9d9d9;"></div><div style="left:26px;top:478px;width:1869px;height:1px;background:#d9d9d9;"></div><div style="left:26px;top:495px;width:1869px;height:1px;background:#d9d9d9;"></div><div style="left:26px;top:513px;width:1869px;height:1px;background:#d9d9d9;"></div><div style="left:26px;top:530px;width:1869px;height:1px;background:#d9d9d9;"></div><div style="left:26px;top:547px;width:1869px;height:1px;background:#d9d9d9;"></div><div style="left:26px;top:564px;width:1869px;height:1px;background:#d9d9d9;"></div><div style="left:26px;top:581px;width:1869px;height:1px;background:#d9d9d9;"></div><div style="left:26px;top:598px;width:1869px;height:1px;background:#d9d9d9;"></div><div style="left:26px;top:615px;width:1869px;height:1px;background:#d9d9d9;"></div><div style="left:26px;top:632px;width:1869px;height:1px;background:#d9d9d9;"></div><div style="left:26px;top:649px;width:1869px;height:1px;background:#d9d9d9;"></div><div style="left:26px;top:666px;width:1869px;height:1px;background:#d9d9d9;"></div><div style="left:26px;top:683px;width:1869px;height:1px;background:#d9d9d9;"></div><div style="left:26px;top:700px;width:1869px;height:1px;background:#d9d9d9;"></div><div style="left:26px;top:718px;width:1869px;height:1px;background:#d9d9d9;"></div><div style="left:26px;top:752px;width:1869px;height:1px;background:#d9d9d9;"></div><div style="left:26px;top:786px;width:1869px;height:1px;background:#d9d9d9;"></div><div style="left:26px;top:820px;width:1869px;height:1px;background:#d9d9d9;"></div><div style="left:26px;top:854px;width:1869px;height:1px;background:#d9d9d9;"></div><div style="left:26px;top:888px;width:1869px;height:1px;background:#d9d9d9;"></div><div style="left:26px;top:922px;width:1869px;height:1px;background:#d9d9d9;"></div><div style="left:26px;top:939px;width:1869px;height:1px;background:#d9d9d9;"></div><div style="left:26px;top:973px;width:1869px;height:1px;background:#d9d9d9;"></div><div style="left:0.5px;top:275.83px;font-size:11.3px;line-height:11.3px;font-weight:400;color:#111;white-space:pre;width:25px;text-align:center;">1</div><div style="left:0px;top:288px;width:25px;height:1px;background:#c6c6c6;"></div><div style="left:0.5px;top:292.83px;font-size:11.3px;line-height:11.3px;font-weight:400;color:#111;white-space:pre;width:25px;text-align:center;">2</div><div style="left:0px;top:305px;width:25px;height:1px;background:#c6c6c6;"></div><div style="left:0.5px;top:309.83px;font-size:11.3px;line-height:11.3px;font-weight:400;color:#111;white-space:pre;width:25px;text-align:center;">3</div><div style="left:0px;top:322px;width:25px;height:1px;background:#c6c6c6;"></div><div style="left:0.5px;top:326.83px;font-size:11.3px;line-height:11.3px;font-weight:400;color:#111;white-space:pre;width:25px;text-align:center;">4</div><div style="left:0px;top:339px;width:25px;height:1px;background:#c6c6c6;"></div><div style="left:0.5px;top:343.83px;font-size:11.3px;line-height:11.3px;font-weight:400;color:#111;white-space:pre;width:25px;text-align:center;">5</div><div style="left:0px;top:356px;width:25px;height:1px;background:#c6c6c6;"></div><div style="left:0.5px;top:360.83px;font-size:11.3px;line-height:11.3px;font-weight:400;color:#111;white-space:pre;width:25px;text-align:center;">6</div><div style="left:0px;top:373px;width:25px;height:1px;background:#c6c6c6;"></div><div style="left:0.5px;top:377.83px;font-size:11.3px;line-height:11.3px;font-weight:400;color:#111;white-space:pre;width:25px;text-align:center;">7</div><div style="left:0px;top:390px;width:25px;height:1px;background:#c6c6c6;"></div><div style="left:0.5px;top:395.83px;font-size:11.3px;line-height:11.3px;font-weight:400;color:#111;white-space:pre;width:25px;text-align:center;">8</div><div style="left:0px;top:408px;width:25px;height:1px;background:#c6c6c6;"></div><div style="left:0.5px;top:412.83px;font-size:11.3px;line-height:11.3px;font-weight:400;color:#111;white-space:pre;width:25px;text-align:center;">9</div><div style="left:0px;top:425px;width:25px;height:1px;background:#c6c6c6;"></div><div style="left:0.5px;top:430.83px;font-size:11.3px;line-height:11.3px;font-weight:400;color:#111;white-space:pre;width:25px;text-align:center;">10</div><div style="left:0px;top:443px;width:25px;height:1px;background:#c6c6c6;"></div><div style="left:0.5px;top:447.83px;font-size:11.3px;line-height:11.3px;font-weight:400;color:#111;white-space:pre;width:25px;text-align:center;">11</div><div style="left:0px;top:460px;width:25px;height:1px;background:#c6c6c6;"></div><div style="left:0.5px;top:465.83px;font-size:11.3px;line-height:11.3px;font-weight:400;color:#111;white-space:pre;width:25px;text-align:center;">12</div><div style="left:0px;top:478px;width:25px;height:1px;background:#c6c6c6;"></div><div style="left:0.5px;top:482.83px;font-size:11.3px;line-height:11.3px;font-weight:400;color:#111;white-space:pre;width:25px;text-align:center;">13</div><div style="left:0px;top:495px;width:25px;height:1px;background:#c6c6c6;"></div><div style="left:0.5px;top:500.83px;font-size:11.3px;line-height:11.3px;font-weight:400;color:#111;white-space:pre;width:25px;text-align:center;">14</div><div style="left:0px;top:513px;width:25px;height:1px;background:#c6c6c6;"></div><div style="left:0.5px;top:517.83px;font-size:11.3px;line-height:11.3px;font-weight:400;color:#111;white-space:pre;width:25px;text-align:center;">15</div><div style="left:0px;top:530px;width:25px;height:1px;background:#c6c6c6;"></div><div style="left:0.5px;top:534.83px;font-size:11.3px;line-height:11.3px;font-weight:400;color:#111;white-space:pre;width:25px;text-align:center;">16</div><div style="left:0px;top:547px;width:25px;height:1px;background:#c6c6c6;"></div><div style="left:0.5px;top:551.83px;font-size:11.3px;line-height:11.3px;font-weight:400;color:#111;white-space:pre;width:25px;text-align:center;">17</div><div style="left:0px;top:564px;width:25px;height:1px;background:#c6c6c6;"></div><div style="left:0.5px;top:568.83px;font-size:11.3px;line-height:11.3px;font-weight:400;color:#111;white-space:pre;width:25px;text-align:center;">18</div><div style="left:0px;top:581px;width:25px;height:1px;background:#c6c6c6;"></div><div style="left:0.5px;top:585.83px;font-size:11.3px;line-height:11.3px;font-weight:400;color:#111;white-space:pre;width:25px;text-align:center;">19</div><div style="left:0px;top:598px;width:25px;height:1px;background:#c6c6c6;"></div><div style="left:0.5px;top:602.83px;font-size:11.3px;line-height:11.3px;font-weight:400;color:#111;white-space:pre;width:25px;text-align:center;">20</div><div style="left:0px;top:615px;width:25px;height:1px;background:#c6c6c6;"></div><div style="left:0.5px;top:619.83px;font-size:11.3px;line-height:11.3px;font-weight:400;color:#111;white-space:pre;width:25px;text-align:center;">21</div><div style="left:0px;top:632px;width:25px;height:1px;background:#c6c6c6;"></div><div style="left:0.5px;top:636.83px;font-size:11.3px;line-height:11.3px;font-weight:400;color:#111;white-space:pre;width:25px;text-align:center;">22</div><div style="left:0px;top:649px;width:25px;height:1px;background:#c6c6c6;"></div><div style="left:0px;top:650px;width:25px;height:17px;background:#d2d2d2;"></div><div style="left:23.5px;top:650px;width:2px;height:17px;background:#217346;"></div><div style="left:0.5px;top:653.83px;font-size:11.3px;line-height:11.3px;font-weight:400;color:#217346;white-space:pre;width:25px;text-align:center;">23</div><div style="left:0px;top:666px;width:25px;height:1px;background:#c6c6c6;"></div><div style="left:0.5px;top:670.83px;font-size:11.3px;line-height:11.3px;font-weight:400;color:#111;white-space:pre;width:25px;text-align:center;">24</div><div style="left:0px;top:683px;width:25px;height:1px;background:#c6c6c6;"></div><div style="left:0.5px;top:687.83px;font-size:11.3px;line-height:11.3px;font-weight:400;color:#111;white-space:pre;width:25px;text-align:center;">25</div><div style="left:0px;top:700px;width:25px;height:1px;background:#c6c6c6;"></div><div style="left:0.5px;top:705.83px;font-size:11.3px;line-height:11.3px;font-weight:400;color:#111;white-space:pre;width:25px;text-align:center;">26</div><div style="left:0px;top:718px;width:25px;height:1px;background:#c6c6c6;"></div><div style="left:0.5px;top:739.63px;font-size:11.3px;line-height:11.3px;font-weight:400;color:#111;white-space:pre;width:25px;text-align:center;">27</div><div style="left:0px;top:752px;width:25px;height:1px;background:#c6c6c6;"></div><div style="left:0.5px;top:773.63px;font-size:11.3px;line-height:11.3px;font-weight:400;color:#111;white-space:pre;width:25px;text-align:center;">28</div><div style="left:0px;top:786px;width:25px;height:1px;background:#c6c6c6;"></div><div style="left:0.5px;top:807.63px;font-size:11.3px;line-height:11.3px;font-weight:400;color:#111;white-space:pre;width:25px;text-align:center;">29</div><div style="left:0px;top:820px;width:25px;height:1px;background:#c6c6c6;"></div><div style="left:0.5px;top:841.63px;font-size:11.3px;line-height:11.3px;font-weight:400;color:#111;white-space:pre;width:25px;text-align:center;">30</div><div style="left:0px;top:854px;width:25px;height:1px;background:#c6c6c6;"></div><div style="left:0.5px;top:875.63px;font-size:11.3px;line-height:11.3px;font-weight:400;color:#111;white-space:pre;width:25px;text-align:center;">31</div><div style="left:0px;top:888px;width:25px;height:1px;background:#c6c6c6;"></div><div style="left:0.5px;top:909.63px;font-size:11.3px;line-height:11.3px;font-weight:400;color:#111;white-space:pre;width:25px;text-align:center;">32</div><div style="left:0px;top:922px;width:25px;height:1px;background:#c6c6c6;"></div><div style="left:0.5px;top:926.83px;font-size:11.3px;line-height:11.3px;font-weight:400;color:#111;white-space:pre;width:25px;text-align:center;">33</div><div style="left:0px;top:939px;width:25px;height:1px;background:#c6c6c6;"></div><div style="left:0.5px;top:960.63px;font-size:11.3px;line-height:11.3px;font-weight:400;color:#111;white-space:pre;width:25px;text-align:center;">34</div><div style="left:0px;top:973px;width:25px;height:1px;background:#c6c6c6;"></div><div style="left:1894px;top:255px;width:1px;height:720px;background:#a0a0a0;"></div><div style="left:26px;top:323px;width:373px;height:34px;background:#a9d08e;"></div><div style="left:26px;top:409px;width:373px;height:105px;background:#a9d08e;"></div><div style="left:26px;top:548px;width:373px;height:17px;background:#ffe699;"></div><div style="left:26px;top:582px;width:373px;height:17px;background:#ffe699;"></div><div style="left:26px;top:616px;width:373px;height:17px;background:#ffe699;"></div><div style="left:26px;top:650px;width:373px;height:17px;background:#ffe699;"></div><div style="left:26px;top:684px;width:373px;height:17px;background:#a9d08e;"></div><div style="left:26px;top:719px;width:373px;height:204px;background:#a9d08e;"></div><div style="left:26px;top:940px;width:373px;height:34px;background:#a9d08e;"></div><div style="left:26px;top:272px;width:373px;height:17px;background:#fff;"></div><div style="left:26px;top:289px;width:373px;height:34px;background:#fff;"></div><div style="left:26px;top:357px;width:373px;height:52px;background:#fff;"></div><div style="left:26px;top:514px;width:373px;height:34px;background:#fff;"></div><div style="left:26px;top:565px;width:373px;height:17px;background:#fff;"></div><div style="left:26px;top:599px;width:373px;height:17px;background:#fff;"></div><div style="left:26px;top:633px;width:373px;height:17px;background:#fff;"></div><div style="left:26px;top:667px;width:373px;height:17px;background:#fff;"></div><div style="left:26px;top:701px;width:373px;height:18px;background:#fff;"></div><div style="left:26px;top:923px;width:373px;height:17px;background:#fff;"></div><div class="dh" style="left:26px;top:288px;width:373px;height:1px;"></div><div class="dh" style="left:26px;top:322px;width:373px;height:1px;"></div><div class="dh" style="left:26px;top:356px;width:373px;height:1px;"></div><div class="dh" style="left:26px;top:373px;width:373px;height:1px;"></div><div class="dh" style="left:26px;top:390px;width:373px;height:1px;"></div><div class="dh" style="left:26px;top:425px;width:373px;height:1px;"></div><div class="dh" style="left:26px;top:460px;width:373px;height:1px;"></div><div class="dh" style="left:26px;top:495px;width:373px;height:1px;"></div><div class="dh" style="left:26px;top:547px;width:373px;height:1px;"></div><div class="dh" style="left:26px;top:564px;width:373px;height:1px;"></div><div class="dh" style="left:26px;top:581px;width:373px;height:1px;"></div><div class="dh" style="left:26px;top:598px;width:373px;height:1px;"></div><div class="dh" style="left:26px;top:615px;width:373px;height:1px;"></div><div class="dh" style="left:26px;top:632px;width:373px;height:1px;"></div><div class="dh" style="left:26px;top:649px;width:373px;height:1px;"></div><div class="dh" style="left:26px;top:666px;width:373px;height:1px;"></div><div class="dh" style="left:26px;top:683px;width:373px;height:1px;"></div><div class="dh" style="left:26px;top:700px;width:373px;height:1px;"></div><div class="dh" style="left:26px;top:752px;width:373px;height:1px;"></div><div class="dh" style="left:26px;top:820px;width:373px;height:1px;"></div><div class="dh" style="left:26px;top:888px;width:373px;height:1px;"></div><div class="dh" style="left:26px;top:939px;width:373px;height:1px;"></div><div class="dh" style="left:26px;top:973px;width:373px;height:1px;"></div><div style="left:25px;top:407px;width:374px;height:2px;background:#000;"></div><div style="left:25px;top:442px;width:374px;height:2px;background:#000;"></div><div style="left:25px;top:477px;width:374px;height:2px;background:#000;"></div><div style="left:25px;top:512px;width:374px;height:2px;background:#000;"></div><div style="left:25px;top:717px;width:374px;height:2px;background:#000;"></div><div style="left:25px;top:785px;width:374px;height:2px;background:#000;"></div><div style="left:25px;top:853px;width:374px;height:2px;background:#000;"></div><div style="left:25px;top:921px;width:374px;height:2px;background:#000;"></div><div class="dv" style="left:239px;top:323px;width:1px;height:51px;"></div><div class="dv" style="left:280px;top:323px;width:1px;height:51px;"></div><div class="dv" style="left:239px;top:391px;width:1px;height:123px;"></div><div class="dv" style="left:280px;top:391px;width:1px;height:123px;"></div><div class="dv" style="left:239px;top:548px;width:1px;height:426px;"></div><div class="dv" style="left:280px;top:548px;width:1px;height:426px;"></div><div class="dv" style="left:239px;top:374px;width:1px;height:17px;"></div><div style="left:397px;top:272px;width:2px;height:702px;background:#000;"></div><div style="left:25px;top:276.23px;font-size:11.3px;line-height:11.3px;font-weight:700;color:#000;white-space:pre;width:373px;text-align:center;">1 квартал</div><div style="left:25px;top:301.43px;font-size:11.3px;line-height:11.3px;font-weight:700;color:#000;white-space:pre;width:373px;text-align:center;">Раздел 1</div><div style="left:25px;top:335.07px;font-size:11.5px;line-height:11.5px;font-weight:400;color:#000;white-space:pre;width:215px;text-align:center;transform:scaleX(1.045);transform-origin:center;">Сумма налога на доходы</div><div style="left:281px;top:333.67px;font-size:12.2px;line-height:12.2px;font-weight:700;color:#000;white-space:pre;width:118px;text-align:center;">4 707,00</div><div style="left:239px;top:377.43px;font-size:11.3px;line-height:11.3px;font-weight:700;color:#000;white-space:pre;width:158px;text-align:center;">Сумма налога</div><div style="left:28px;top:413.07px;font-size:11.5px;line-height:11.5px;font-weight:400;color:#000;white-space:pre;transform:scaleX(1.045);transform-origin:left;">по первому сроку перечисления</div><div style="left:28px;top:430.07px;font-size:11.5px;line-height:11.5px;font-weight:400;color:#000;white-space:pre;transform:scaleX(1.045);transform-origin:left;">по второму сроку перечисления</div><div style="left:281px;top:428.67px;font-size:12.2px;line-height:12.2px;font-weight:700;color:#000;white-space:pre;width:118px;text-align:center;">0,00</div><div style="left:28px;top:448.07px;font-size:11.5px;line-height:11.5px;font-weight:400;color:#000;white-space:pre;transform:scaleX(1.045);transform-origin:left;">по третьему сроку перечисления</div><div style="left:281px;top:446.67px;font-size:12.2px;line-height:12.2px;font-weight:700;color:#000;white-space:pre;width:118px;text-align:center;">0,00</div><div style="left:28px;top:465.07px;font-size:11.5px;line-height:11.5px;font-weight:400;color:#000;white-space:pre;transform:scaleX(1.045);transform-origin:left;">по четвертому сроку перечисления</div><div style="left:281px;top:463.67px;font-size:12.2px;line-height:12.2px;font-weight:700;color:#000;white-space:pre;width:118px;text-align:center;">0,00</div><div style="left:28px;top:483.07px;font-size:11.5px;line-height:11.5px;font-weight:400;color:#000;white-space:pre;transform:scaleX(1.045);transform-origin:left;">по пятому сроку перечисления</div><div style="left:281px;top:481.67px;font-size:12.2px;line-height:12.2px;font-weight:700;color:#000;white-space:pre;width:118px;text-align:center;">747,00</div><div style="left:28px;top:500.07px;font-size:11.5px;line-height:11.5px;font-weight:400;color:#000;white-space:pre;transform:scaleX(1.045);transform-origin:left;">по шестому сроку перечисления</div><div style="left:281px;top:498.67px;font-size:12.2px;line-height:12.2px;font-weight:700;color:#000;white-space:pre;width:118px;text-align:center;">3 960,00</div><div style="left:25px;top:525.93px;font-size:11.3px;line-height:11.3px;font-weight:700;color:#000;white-space:pre;width:373px;text-align:center;">Раздел 2</div><div style="left:28px;top:552.07px;font-size:11.5px;line-height:11.5px;font-weight:400;color:#000;white-space:pre;transform:scaleX(1.045);transform-origin:left;">Сумма дохода получ физ лиц</div><div style="left:240px;top:552.07px;font-size:11.5px;line-height:11.5px;font-weight:400;color:#000;white-space:pre;width:40px;text-align:center;transform:scaleX(1.045);transform-origin:center;">120</div><div style="left:281px;top:550.67px;font-size:12.2px;line-height:12.2px;font-weight:700;color:#000;white-space:pre;width:118px;text-align:center;">79 390,00</div><div style="left:28px;top:586.07px;font-size:11.5px;line-height:11.5px;font-weight:400;color:#000;white-space:pre;transform:scaleX(1.045);transform-origin:left;">Сумма вычетов и расходов</div><div style="left:240px;top:586.07px;font-size:11.5px;line-height:11.5px;font-weight:400;color:#000;white-space:pre;width:40px;text-align:center;transform:scaleX(1.045);transform-origin:center;">130</div><div style="left:281px;top:586.07px;font-size:11.5px;line-height:11.5px;font-weight:400;color:#000;white-space:pre;width:118px;text-align:center;transform:scaleX(1.045);transform-origin:center;">36 000,00</div><div style="left:28px;top:619.43px;font-size:11.3px;line-height:11.3px;font-weight:700;color:#000;white-space:pre;">Налоговая база</div><div style="left:240px;top:618.67px;font-size:12.2px;line-height:12.2px;font-weight:700;color:#000;white-space:pre;width:40px;text-align:center;">131</div><div style="left:281px;top:618.67px;font-size:12.2px;line-height:12.2px;font-weight:700;color:#000;white-space:pre;width:118px;text-align:center;">43 390,00</div><div style="left:28px;top:654.07px;font-size:11.5px;line-height:11.5px;font-weight:400;color:#000;white-space:pre;transform:scaleX(1.045);transform-origin:left;">Сумма налога исчисленная</div><div style="left:281px;top:652.67px;font-size:12.2px;line-height:12.2px;font-weight:700;color:#000;white-space:pre;width:118px;text-align:center;">5 641</div><div style="left:28px;top:688.07px;font-size:11.5px;line-height:11.5px;font-weight:400;color:#000;white-space:pre;transform:scaleX(1.045);transform-origin:left;">Сумма налога удержанная</div><div style="left:281px;top:686.67px;font-size:12.2px;line-height:12.2px;font-weight:700;color:#000;white-space:pre;width:118px;text-align:center;">4 707,00</div><div style="left:28px;top:723.07px;font-size:11.5px;line-height:11.5px;font-weight:400;color:#000;white-space:pre;transform:scaleX(1.045);transform-origin:left;">с 1-го по 22-е число первого месяца</div><div style="left:28px;top:740.37px;font-size:11.5px;line-height:11.5px;font-weight:400;color:#000;white-space:pre;transform:scaleX(1.045);transform-origin:left;">последнего квартала</div><div style="left:28px;top:757.07px;font-size:11.5px;line-height:11.5px;font-weight:400;color:#000;white-space:pre;transform:scaleX(1.045);transform-origin:left;">с 23-го по последнее число первого</div><div style="left:28px;top:774.37px;font-size:11.5px;line-height:11.5px;font-weight:400;color:#000;white-space:pre;transform:scaleX(1.045);transform-origin:left;">месяца последнего квартала</div><div style="left:281px;top:763.67px;font-size:12.2px;line-height:12.2px;font-weight:700;color:#000;white-space:pre;width:118px;text-align:center;">0,00</div><div style="left:28px;top:791.07px;font-size:11.5px;line-height:11.5px;font-weight:400;color:#000;white-space:pre;transform:scaleX(1.045);transform-origin:left;">с 1-го по 22-е число второго месяца</div><div style="left:28px;top:808.37px;font-size:11.5px;line-height:11.5px;font-weight:400;color:#000;white-space:pre;transform:scaleX(1.045);transform-origin:left;">последнего квартала</div><div style="left:281px;top:797.67px;font-size:12.2px;line-height:12.2px;font-weight:700;color:#000;white-space:pre;width:118px;text-align:center;">0,00</div><div style="left:28px;top:825.07px;font-size:11.5px;line-height:11.5px;font-weight:400;color:#000;white-space:pre;transform:scaleX(1.045);transform-origin:left;">с 23-го по последнее число второго</div><div style="left:28px;top:842.37px;font-size:11.5px;line-height:11.5px;font-weight:400;color:#000;white-space:pre;transform:scaleX(1.045);transform-origin:left;">месяца последнего квартала</div><div style="left:281px;top:831.67px;font-size:12.2px;line-height:12.2px;font-weight:700;color:#000;white-space:pre;width:118px;text-align:center;">0,00</div><div style="left:28px;top:859.07px;font-size:11.5px;line-height:11.5px;font-weight:400;color:#000;white-space:pre;transform:scaleX(1.045);transform-origin:left;">с 1-го числа по 22-е число третьего</div><div style="left:28px;top:876.37px;font-size:11.5px;line-height:11.5px;font-weight:400;color:#000;white-space:pre;transform:scaleX(1.045);transform-origin:left;">месяца последнего квартала</div><div style="left:281px;top:865.67px;font-size:12.2px;line-height:12.2px;font-weight:700;color:#000;white-space:pre;width:118px;text-align:center;">747,00</div><div style="left:28px;top:893.07px;font-size:11.5px;line-height:11.5px;font-weight:400;color:#000;white-space:pre;transform:scaleX(1.045);transform-origin:left;">с 23-го по последнее число третьего</div><div style="left:28px;top:910.37px;font-size:11.5px;line-height:11.5px;font-weight:400;color:#000;white-space:pre;transform:scaleX(1.045);transform-origin:left;">месяца последнего квартала</div><div style="left:281px;top:899.67px;font-size:12.2px;line-height:12.2px;font-weight:700;color:#000;white-space:pre;width:118px;text-align:center;">3 960,00</div><div style="left:28px;top:944.07px;font-size:11.5px;line-height:11.5px;font-weight:400;color:#000;white-space:pre;transform:scaleX(1.045);transform-origin:left;">Сумма налога, не удержанная</div><div style="left:28px;top:961.37px;font-size:11.5px;line-height:11.5px;font-weight:400;color:#000;white-space:pre;transform:scaleX(1.045);transform-origin:left;">налоговым агентом</div><div style="left:455px;top:323px;width:373px;height:34px;background:#a9d08e;"></div><div style="left:455px;top:409px;width:373px;height:105px;background:#a9d08e;"></div><div style="left:455px;top:548px;width:373px;height:17px;background:#ffe699;"></div><div style="left:455px;top:582px;width:373px;height:17px;background:#ffe699;"></div><div style="left:455px;top:616px;width:373px;height:17px;background:#ffe699;"></div><div style="left:455px;top:650px;width:373px;height:17px;background:#ffe699;"></div><div style="left:455px;top:684px;width:373px;height:17px;background:#a9d08e;"></div><div style="left:455px;top:719px;width:373px;height:204px;background:#a9d08e;"></div><div style="left:455px;top:940px;width:373px;height:34px;background:#a9d08e;"></div><div style="left:455px;top:272px;width:373px;height:17px;background:#fff;"></div><div style="left:455px;top:289px;width:373px;height:34px;background:#fff;"></div><div style="left:455px;top:357px;width:373px;height:52px;background:#fff;"></div><div style="left:455px;top:514px;width:373px;height:34px;background:#fff;"></div><div style="left:455px;top:565px;width:373px;height:17px;background:#fff;"></div><div style="left:455px;top:599px;width:373px;height:17px;background:#fff;"></div><div style="left:455px;top:633px;width:373px;height:17px;background:#fff;"></div><div style="left:455px;top:667px;width:373px;height:17px;background:#fff;"></div><div style="left:455px;top:701px;width:373px;height:18px;background:#fff;"></div><div style="left:455px;top:923px;width:373px;height:17px;background:#fff;"></div><div class="dh" style="left:455px;top:288px;width:373px;height:1px;"></div><div class="dh" style="left:455px;top:322px;width:373px;height:1px;"></div><div class="dh" style="left:455px;top:356px;width:373px;height:1px;"></div><div class="dh" style="left:455px;top:373px;width:373px;height:1px;"></div><div class="dh" style="left:455px;top:390px;width:373px;height:1px;"></div><div class="dh" style="left:455px;top:425px;width:373px;height:1px;"></div><div class="dh" style="left:455px;top:460px;width:373px;height:1px;"></div><div class="dh" style="left:455px;top:495px;width:373px;height:1px;"></div><div class="dh" style="left:455px;top:547px;width:373px;height:1px;"></div><div class="dh" style="left:455px;top:564px;width:373px;height:1px;"></div><div class="dh" style="left:455px;top:581px;width:373px;height:1px;"></div><div class="dh" style="left:455px;top:598px;width:373px;height:1px;"></div><div class="dh" style="left:455px;top:615px;width:373px;height:1px;"></div><div class="dh" style="left:455px;top:632px;width:373px;height:1px;"></div><div class="dh" style="left:455px;top:649px;width:373px;height:1px;"></div><div class="dh" style="left:455px;top:666px;width:373px;height:1px;"></div><div class="dh" style="left:455px;top:683px;width:373px;height:1px;"></div><div class="dh" style="left:455px;top:700px;width:373px;height:1px;"></div><div class="dh" style="left:455px;top:752px;width:373px;height:1px;"></div><div class="dh" style="left:455px;top:820px;width:373px;height:1px;"></div><div class="dh" style="left:455px;top:888px;width:373px;height:1px;"></div><div class="dh" style="left:455px;top:939px;width:373px;height:1px;"></div><div class="dh" style="left:455px;top:973px;width:373px;height:1px;"></div><div style="left:454px;top:407px;width:374px;height:2px;background:#000;"></div><div style="left:454px;top:442px;width:374px;height:2px;background:#000;"></div><div style="left:454px;top:477px;width:374px;height:2px;background:#000;"></div><div style="left:454px;top:512px;width:374px;height:2px;background:#000;"></div><div style="left:454px;top:717px;width:374px;height:2px;background:#000;"></div><div style="left:454px;top:785px;width:374px;height:2px;background:#000;"></div><div style="left:454px;top:853px;width:374px;height:2px;background:#000;"></div><div style="left:454px;top:921px;width:374px;height:2px;background:#000;"></div><div class="dv" style="left:668px;top:323px;width:1px;height:51px;"></div><div class="dv" style="left:709px;top:323px;width:1px;height:51px;"></div><div class="dv" style="left:668px;top:391px;width:1px;height:123px;"></div><div class="dv" style="left:709px;top:391px;width:1px;height:123px;"></div><div class="dv" style="left:668px;top:548px;width:1px;height:426px;"></div><div class="dv" style="left:709px;top:548px;width:1px;height:426px;"></div><div class="dv" style="left:668px;top:374px;width:1px;height:17px;"></div><div style="left:453px;top:272px;width:2px;height:702px;background:#000;"></div><div style="left:826px;top:272px;width:2px;height:702px;background:#000;"></div><div style="left:454px;top:276.23px;font-size:11.3px;line-height:11.3px;font-weight:700;color:#000;white-space:pre;width:373px;text-align:center;">2 квартал</div><div style="left:454px;top:301.43px;font-size:11.3px;line-height:11.3px;font-weight:700;color:#000;white-space:pre;width:373px;text-align:center;">Раздел 1</div><div style="left:454px;top:335.07px;font-size:11.5px;line-height:11.5px;font-weight:400;color:#000;white-space:pre;width:215px;text-align:center;transform:scaleX(1.045);transform-origin:center;">Сумма налога на доходы</div><div style="left:710px;top:333.67px;font-size:12.2px;line-height:12.2px;font-weight:700;color:#000;white-space:pre;width:118px;text-align:center;">35 546,00</div><div style="left:668px;top:377.43px;font-size:11.3px;line-height:11.3px;font-weight:700;color:#000;white-space:pre;width:158px;text-align:center;">Сумма налога</div><div style="left:457px;top:413.07px;font-size:11.5px;line-height:11.5px;font-weight:400;color:#000;white-space:pre;transform:scaleX(1.045);transform-origin:left;">по первому сроку перечисления</div><div style="left:710px;top:411.67px;font-size:12.2px;line-height:12.2px;font-weight:700;color:#000;white-space:pre;width:118px;text-align:center;">598,00</div><div style="left:457px;top:430.07px;font-size:11.5px;line-height:11.5px;font-weight:400;color:#000;white-space:pre;transform:scaleX(1.045);transform-origin:left;">по второму сроку перечисления</div><div style="left:710px;top:428.67px;font-size:12.2px;line-height:12.2px;font-weight:700;color:#000;white-space:pre;width:118px;text-align:center;">1 644,00</div><div style="left:457px;top:448.07px;font-size:11.5px;line-height:11.5px;font-weight:400;color:#000;white-space:pre;transform:scaleX(1.045);transform-origin:left;">по третьему сроку перечисления</div><div style="left:710px;top:446.67px;font-size:12.2px;line-height:12.2px;font-weight:700;color:#000;white-space:pre;width:118px;text-align:center;">9 863,00</div><div style="left:457px;top:465.07px;font-size:11.5px;line-height:11.5px;font-weight:400;color:#000;white-space:pre;transform:scaleX(1.045);transform-origin:left;">по четвертому сроку перечисления</div><div style="left:710px;top:463.67px;font-size:12.2px;line-height:12.2px;font-weight:700;color:#000;white-space:pre;width:118px;text-align:center;">1 942,00</div><div style="left:457px;top:483.07px;font-size:11.5px;line-height:11.5px;font-weight:400;color:#000;white-space:pre;transform:scaleX(1.045);transform-origin:left;">по пятому сроку перечисления</div><div style="left:710px;top:481.67px;font-size:12.2px;line-height:12.2px;font-weight:700;color:#000;white-space:pre;width:118px;text-align:center;">16 045,00</div><div style="left:457px;top:500.07px;font-size:11.5px;line-height:11.5px;font-weight:400;color:#000;white-space:pre;transform:scaleX(1.045);transform-origin:left;">по шестому сроку перечисления</div><div style="left:710px;top:498.67px;font-size:12.2px;line-height:12.2px;font-weight:700;color:#000;white-space:pre;width:118px;text-align:center;">747,00</div><div style="left:454px;top:525.93px;font-size:11.3px;line-height:11.3px;font-weight:700;color:#000;white-space:pre;width:373px;text-align:center;">Раздел 2</div><div style="left:457px;top:552.07px;font-size:11.5px;line-height:11.5px;font-weight:400;color:#000;white-space:pre;transform:scaleX(1.045);transform-origin:left;">Сумма дохода получ физ лиц</div><div style="left:710px;top:550.67px;font-size:12.2px;line-height:12.2px;font-weight:700;color:#000;white-space:pre;width:118px;text-align:center;">373 359,60</div><div style="left:457px;top:586.07px;font-size:11.5px;line-height:11.5px;font-weight:400;color:#000;white-space:pre;transform:scaleX(1.045);transform-origin:left;">Сумма вычетов и расходов</div><div style="left:710px;top:586.07px;font-size:11.5px;line-height:11.5px;font-weight:400;color:#000;white-space:pre;width:118px;text-align:center;transform:scaleX(1.045);transform-origin:center;">72 000,00</div><div style="left:457px;top:619.43px;font-size:11.3px;line-height:11.3px;font-weight:700;color:#000;white-space:pre;">Налоговая база</div><div style="left:710px;top:618.67px;font-size:12.2px;line-height:12.2px;font-weight:700;color:#000;white-space:pre;width:118px;text-align:center;">301 359,60</div><div style="left:457px;top:654.07px;font-size:11.5px;line-height:11.5px;font-weight:400;color:#000;white-space:pre;transform:scaleX(1.045);transform-origin:left;">Сумма налога исчисленная</div><div style="left:710px;top:652.67px;font-size:12.2px;line-height:12.2px;font-weight:700;color:#000;white-space:pre;width:118px;text-align:center;">39 177</div><div style="left:457px;top:688.07px;font-size:11.5px;line-height:11.5px;font-weight:400;color:#000;white-space:pre;transform:scaleX(1.045);transform-origin:left;">Сумма налога удержанная</div><div style="left:710px;top:686.67px;font-size:12.2px;line-height:12.2px;font-weight:700;color:#000;white-space:pre;width:118px;text-align:center;">35 546,00</div><div style="left:457px;top:723.07px;font-size:11.5px;line-height:11.5px;font-weight:400;color:#000;white-space:pre;transform:scaleX(1.045);transform-origin:left;">с 1-го по 22-е число первого месяца</div><div style="left:457px;top:740.37px;font-size:11.5px;line-height:11.5px;font-weight:400;color:#000;white-space:pre;transform:scaleX(1.045);transform-origin:left;">последнего квартала</div><div style="left:710px;top:729.67px;font-size:12.2px;line-height:12.2px;font-weight:700;color:#000;white-space:pre;width:118px;text-align:center;">598,00</div><div style="left:457px;top:757.07px;font-size:11.5px;line-height:11.5px;font-weight:400;color:#000;white-space:pre;transform:scaleX(1.045);transform-origin:left;">с 23-го по последнее число первого</div><div style="left:457px;top:774.37px;font-size:11.5px;line-height:11.5px;font-weight:400;color:#000;white-space:pre;transform:scaleX(1.045);transform-origin:left;">месяца последнего квартала</div><div style="left:710px;top:763.67px;font-size:12.2px;line-height:12.2px;font-weight:700;color:#000;white-space:pre;width:118px;text-align:center;">1 644,00</div><div style="left:457px;top:791.07px;font-size:11.5px;line-height:11.5px;font-weight:400;color:#000;white-space:pre;transform:scaleX(1.045);transform-origin:left;">с 1-го по 22-е число второго месяца</div><div style="left:457px;top:808.37px;font-size:11.5px;line-height:11.5px;font-weight:400;color:#000;white-space:pre;transform:scaleX(1.045);transform-origin:left;">последнего квартала</div><div style="left:710px;top:797.67px;font-size:12.2px;line-height:12.2px;font-weight:700;color:#000;white-space:pre;width:118px;text-align:center;">9 863,00</div><div style="left:457px;top:825.07px;font-size:11.5px;line-height:11.5px;font-weight:400;color:#000;white-space:pre;transform:scaleX(1.045);transform-origin:left;">с 23-го по последнее число второго</div><div style="left:457px;top:842.37px;font-size:11.5px;line-height:11.5px;font-weight:400;color:#000;white-space:pre;transform:scaleX(1.045);transform-origin:left;">месяца последнего квартала</div><div style="left:710px;top:831.67px;font-size:12.2px;line-height:12.2px;font-weight:700;color:#000;white-space:pre;width:118px;text-align:center;">1 942,00</div><div style="left:457px;top:859.07px;font-size:11.5px;line-height:11.5px;font-weight:400;color:#000;white-space:pre;transform:scaleX(1.045);transform-origin:left;">с 1-го числа по 22-е число третьего</div><div style="left:457px;top:876.37px;font-size:11.5px;line-height:11.5px;font-weight:400;color:#000;white-space:pre;transform:scaleX(1.045);transform-origin:left;">месяца последнего квартала</div><div style="left:710px;top:865.67px;font-size:12.2px;line-height:12.2px;font-weight:700;color:#000;white-space:pre;width:118px;text-align:center;">16 045,00</div><div style="left:457px;top:893.07px;font-size:11.5px;line-height:11.5px;font-weight:400;color:#000;white-space:pre;transform:scaleX(1.045);transform-origin:left;">с 23-го по последнее число третьего</div><div style="left:457px;top:910.37px;font-size:11.5px;line-height:11.5px;font-weight:400;color:#000;white-space:pre;transform:scaleX(1.045);transform-origin:left;">месяца последнего квартала</div><div style="left:710px;top:899.67px;font-size:12.2px;line-height:12.2px;font-weight:700;color:#000;white-space:pre;width:118px;text-align:center;">747,00</div><div style="left:457px;top:944.07px;font-size:11.5px;line-height:11.5px;font-weight:400;color:#000;white-space:pre;transform:scaleX(1.045);transform-origin:left;">Сумма налога, не удержанная</div><div style="left:457px;top:961.37px;font-size:11.5px;line-height:11.5px;font-weight:400;color:#000;white-space:pre;transform:scaleX(1.045);transform-origin:left;">налоговым агентом</div><div style="left:884px;top:323px;width:373px;height:34px;background:#a9d08e;"></div><div style="left:884px;top:409px;width:373px;height:105px;background:#a9d08e;"></div><div style="left:884px;top:548px;width:373px;height:17px;background:#ffe699;"></div><div style="left:884px;top:582px;width:373px;height:17px;background:#ffe699;"></div><div style="left:884px;top:616px;width:373px;height:17px;background:#ffe699;"></div><div style="left:884px;top:650px;width:373px;height:17px;background:#ffe699;"></div><div style="left:884px;top:684px;width:373px;height:17px;background:#a9d08e;"></div><div style="left:884px;top:719px;width:373px;height:204px;background:#a9d08e;"></div><div style="left:884px;top:940px;width:373px;height:34px;background:#a9d08e;"></div><div style="left:884px;top:272px;width:373px;height:17px;background:#fff;"></div><div style="left:884px;top:289px;width:373px;height:34px;background:#fff;"></div><div style="left:884px;top:357px;width:373px;height:52px;background:#fff;"></div><div style="left:884px;top:514px;width:373px;height:34px;background:#fff;"></div><div style="left:884px;top:565px;width:373px;height:17px;background:#fff;"></div><div style="left:884px;top:599px;width:373px;height:17px;background:#fff;"></div><div style="left:884px;top:633px;width:373px;height:17px;background:#fff;"></div><div style="left:884px;top:667px;width:373px;height:17px;background:#fff;"></div><div style="left:884px;top:701px;width:373px;height:18px;background:#fff;"></div><div style="left:884px;top:923px;width:373px;height:17px;background:#fff;"></div><div class="dh" style="left:884px;top:288px;width:373px;height:1px;"></div><div class="dh" style="left:884px;top:322px;width:373px;height:1px;"></div><div class="dh" style="left:884px;top:356px;width:373px;height:1px;"></div><div class="dh" style="left:884px;top:373px;width:373px;height:1px;"></div><div class="dh" style="left:884px;top:390px;width:373px;height:1px;"></div><div class="dh" style="left:884px;top:425px;width:373px;height:1px;"></div><div class="dh" style="left:884px;top:460px;width:373px;height:1px;"></div><div class="dh" style="left:884px;top:495px;width:373px;height:1px;"></div><div class="dh" style="left:884px;top:547px;width:373px;height:1px;"></div><div class="dh" style="left:884px;top:564px;width:373px;height:1px;"></div><div class="dh" style="left:884px;top:581px;width:373px;height:1px;"></div><div class="dh" style="left:884px;top:598px;width:373px;height:1px;"></div><div class="dh" style="left:884px;top:615px;width:373px;height:1px;"></div><div class="dh" style="left:884px;top:632px;width:373px;height:1px;"></div><div class="dh" style="left:884px;top:649px;width:373px;height:1px;"></div><div class="dh" style="left:884px;top:666px;width:373px;height:1px;"></div><div class="dh" style="left:884px;top:683px;width:373px;height:1px;"></div><div class="dh" style="left:884px;top:700px;width:373px;height:1px;"></div><div class="dh" style="left:884px;top:752px;width:373px;height:1px;"></div><div class="dh" style="left:884px;top:820px;width:373px;height:1px;"></div><div class="dh" style="left:884px;top:888px;width:373px;height:1px;"></div><div class="dh" style="left:884px;top:939px;width:373px;height:1px;"></div><div class="dh" style="left:884px;top:973px;width:373px;height:1px;"></div><div style="left:883px;top:407px;width:374px;height:2px;background:#000;"></div><div style="left:883px;top:442px;width:374px;height:2px;background:#000;"></div><div style="left:883px;top:477px;width:374px;height:2px;background:#000;"></div><div style="left:883px;top:512px;width:374px;height:2px;background:#000;"></div><div style="left:883px;top:717px;width:374px;height:2px;background:#000;"></div><div style="left:883px;top:785px;width:374px;height:2px;background:#000;"></div><div style="left:883px;top:853px;width:374px;height:2px;background:#000;"></div><div style="left:883px;top:921px;width:374px;height:2px;background:#000;"></div><div class="dv" style="left:1097px;top:323px;width:1px;height:51px;"></div><div class="dv" style="left:1138px;top:323px;width:1px;height:51px;"></div><div class="dv" style="left:1097px;top:391px;width:1px;height:123px;"></div><div class="dv" style="left:1138px;top:391px;width:1px;height:123px;"></div><div class="dv" style="left:1097px;top:548px;width:1px;height:426px;"></div><div class="dv" style="left:1138px;top:548px;width:1px;height:426px;"></div><div class="dv" style="left:1097px;top:374px;width:1px;height:17px;"></div><div style="left:882px;top:272px;width:2px;height:702px;background:#000;"></div><div style="left:1255px;top:272px;width:2px;height:702px;background:#000;"></div><div style="left:883px;top:276.23px;font-size:11.3px;line-height:11.3px;font-weight:700;color:#000;white-space:pre;width:373px;text-align:center;">3 квартал</div><div style="left:883px;top:301.43px;font-size:11.3px;line-height:11.3px;font-weight:700;color:#000;white-space:pre;width:373px;text-align:center;">Раздел 1</div><div style="left:883px;top:335.07px;font-size:11.5px;line-height:11.5px;font-weight:400;color:#000;white-space:pre;width:215px;text-align:center;transform:scaleX(1.045);transform-origin:center;">Сумма налога на доходы</div><div style="left:1139px;top:333.67px;font-size:12.2px;line-height:12.2px;font-weight:700;color:#000;white-space:pre;width:118px;text-align:center;">84 706</div><div style="left:1097px;top:377.43px;font-size:11.3px;line-height:11.3px;font-weight:700;color:#000;white-space:pre;width:158px;text-align:center;">Сумма налога</div><div style="left:1139px;top:395.07px;font-size:11.5px;line-height:11.5px;font-weight:400;color:#000;white-space:pre;width:118px;text-align:center;transform:scaleX(1.045);transform-origin:center;">49 160</div><div style="left:886px;top:413.07px;font-size:11.5px;line-height:11.5px;font-weight:400;color:#000;white-space:pre;transform:scaleX(1.045);transform-origin:left;">по первому сроку перечисления</div><div style="left:1139px;top:411.67px;font-size:12.2px;line-height:12.2px;font-weight:700;color:#000;white-space:pre;width:118px;text-align:center;">15 288</div><div style="left:886px;top:430.07px;font-size:11.5px;line-height:11.5px;font-weight:400;color:#000;white-space:pre;transform:scaleX(1.045);transform-origin:left;">по второму сроку перечисления</div><div style="left:1139px;top:428.67px;font-size:12.2px;line-height:12.2px;font-weight:700;color:#000;white-space:pre;width:118px;text-align:center;">1 495</div><div style="left:886px;top:448.07px;font-size:11.5px;line-height:11.5px;font-weight:400;color:#000;white-space:pre;transform:scaleX(1.045);transform-origin:left;">по третьему сроку перечисления</div><div style="left:1139px;top:446.67px;font-size:12.2px;line-height:12.2px;font-weight:700;color:#000;white-space:pre;width:118px;text-align:center;">7 546</div><div style="left:886px;top:465.07px;font-size:11.5px;line-height:11.5px;font-weight:400;color:#000;white-space:pre;transform:scaleX(1.045);transform-origin:left;">по четвертому сроку перечисления</div><div style="left:1139px;top:463.67px;font-size:12.2px;line-height:12.2px;font-weight:700;color:#000;white-space:pre;width:118px;text-align:center;">9 115</div><div style="left:886px;top:483.07px;font-size:11.5px;line-height:11.5px;font-weight:400;color:#000;white-space:pre;transform:scaleX(1.045);transform-origin:left;">по пятому сроку перечисления</div><div style="left:1139px;top:481.67px;font-size:12.2px;line-height:12.2px;font-weight:700;color:#000;white-space:pre;width:118px;text-align:center;">8 843</div><div style="left:886px;top:500.07px;font-size:11.5px;line-height:11.5px;font-weight:400;color:#000;white-space:pre;transform:scaleX(1.045);transform-origin:left;">по шестому сроку перечисления</div><div style="left:1139px;top:498.67px;font-size:12.2px;line-height:12.2px;font-weight:700;color:#000;white-space:pre;width:118px;text-align:center;">6 873</div><div style="left:883px;top:525.93px;font-size:11.3px;line-height:11.3px;font-weight:700;color:#000;white-space:pre;width:373px;text-align:center;">Раздел 2</div><div style="left:886px;top:552.07px;font-size:11.5px;line-height:11.5px;font-weight:400;color:#000;white-space:pre;transform:scaleX(1.045);transform-origin:left;">Сумма дохода получ физ лиц</div><div style="left:1098px;top:552.07px;font-size:11.5px;line-height:11.5px;font-weight:400;color:#000;white-space:pre;width:40px;text-align:center;transform:scaleX(1.045);transform-origin:center;">120</div><div style="left:1139px;top:550.67px;font-size:12.2px;line-height:12.2px;font-weight:700;color:#000;white-space:pre;width:118px;text-align:center;">819 165,20</div><div style="left:886px;top:586.07px;font-size:11.5px;line-height:11.5px;font-weight:400;color:#000;white-space:pre;transform:scaleX(1.045);transform-origin:left;">Сумма вычетов и расходов</div><div style="left:1139px;top:586.07px;font-size:11.5px;line-height:11.5px;font-weight:400;color:#000;white-space:pre;width:118px;text-align:center;transform:scaleX(1.045);transform-origin:center;">108 000</div><div style="left:886px;top:619.43px;font-size:11.3px;line-height:11.3px;font-weight:700;color:#000;white-space:pre;">Налоговая база</div><div style="left:1139px;top:618.67px;font-size:12.2px;line-height:12.2px;font-weight:700;color:#000;white-space:pre;width:118px;text-align:center;">711 165,20</div><div style="left:886px;top:654.07px;font-size:11.5px;line-height:11.5px;font-weight:400;color:#000;white-space:pre;transform:scaleX(1.045);transform-origin:left;">Сумма налога исчисленная</div><div style="left:1139px;top:652.67px;font-size:12.2px;line-height:12.2px;font-weight:700;color:#000;white-space:pre;width:118px;text-align:center;">92 451</div><div style="left:886px;top:688.07px;font-size:11.5px;line-height:11.5px;font-weight:400;color:#000;white-space:pre;transform:scaleX(1.045);transform-origin:left;">Сумма налога удержанная</div><div style="left:1139px;top:686.67px;font-size:12.2px;line-height:12.2px;font-weight:700;color:#000;white-space:pre;width:118px;text-align:center;">84 706,00</div><div style="left:1139px;top:705.07px;font-size:11.5px;line-height:11.5px;font-weight:400;color:#000;white-space:pre;width:118px;text-align:center;transform:scaleX(1.045);transform-origin:center;">49 160</div><div style="left:886px;top:723.07px;font-size:11.5px;line-height:11.5px;font-weight:400;color:#000;white-space:pre;transform:scaleX(1.045);transform-origin:left;">с 1-го по 22-е число первого месяца</div><div style="left:886px;top:740.37px;font-size:11.5px;line-height:11.5px;font-weight:400;color:#000;white-space:pre;transform:scaleX(1.045);transform-origin:left;">последнего квартала</div><div style="left:1139px;top:729.67px;font-size:12.2px;line-height:12.2px;font-weight:700;color:#000;white-space:pre;width:118px;text-align:center;">15 288</div><div style="left:886px;top:757.07px;font-size:11.5px;line-height:11.5px;font-weight:400;color:#000;white-space:pre;transform:scaleX(1.045);transform-origin:left;">с 23-го по последнее число первого</div><div style="left:886px;top:774.37px;font-size:11.5px;line-height:11.5px;font-weight:400;color:#000;white-space:pre;transform:scaleX(1.045);transform-origin:left;">месяца последнего квартала</div><div style="left:1139px;top:763.67px;font-size:12.2px;line-height:12.2px;font-weight:700;color:#000;white-space:pre;width:118px;text-align:center;">1 495</div><div style="left:886px;top:791.07px;font-size:11.5px;line-height:11.5px;font-weight:400;color:#000;white-space:pre;transform:scaleX(1.045);transform-origin:left;">с 1-го по 22-е число второго месяца</div><div style="left:886px;top:808.37px;font-size:11.5px;line-height:11.5px;font-weight:400;color:#000;white-space:pre;transform:scaleX(1.045);transform-origin:left;">последнего квартала</div><div style="left:1139px;top:797.67px;font-size:12.2px;line-height:12.2px;font-weight:700;color:#000;white-space:pre;width:118px;text-align:center;">7 546</div><div style="left:886px;top:825.07px;font-size:11.5px;line-height:11.5px;font-weight:400;color:#000;white-space:pre;transform:scaleX(1.045);transform-origin:left;">с 23-го по последнее число второго</div><div style="left:886px;top:842.37px;font-size:11.5px;line-height:11.5px;font-weight:400;color:#000;white-space:pre;transform:scaleX(1.045);transform-origin:left;">месяца последнего квартала</div><div style="left:1139px;top:831.67px;font-size:12.2px;line-height:12.2px;font-weight:700;color:#000;white-space:pre;width:118px;text-align:center;">9 115</div><div style="left:886px;top:859.07px;font-size:11.5px;line-height:11.5px;font-weight:400;color:#000;white-space:pre;transform:scaleX(1.045);transform-origin:left;">с 1-го числа по 22-е число третьего</div><div style="left:886px;top:876.37px;font-size:11.5px;line-height:11.5px;font-weight:400;color:#000;white-space:pre;transform:scaleX(1.045);transform-origin:left;">месяца последнего квартала</div><div style="left:1139px;top:865.67px;font-size:12.2px;line-height:12.2px;font-weight:700;color:#000;white-space:pre;width:118px;text-align:center;">8 843</div><div style="left:886px;top:893.07px;font-size:11.5px;line-height:11.5px;font-weight:400;color:#000;white-space:pre;transform:scaleX(1.045);transform-origin:left;">с 23-го по последнее число третьего</div><div style="left:886px;top:910.37px;font-size:11.5px;line-height:11.5px;font-weight:400;color:#000;white-space:pre;transform:scaleX(1.045);transform-origin:left;">месяца последнего квартала</div><div style="left:1139px;top:899.67px;font-size:12.2px;line-height:12.2px;font-weight:700;color:#000;white-space:pre;width:118px;text-align:center;">6 873</div><div style="left:886px;top:944.07px;font-size:11.5px;line-height:11.5px;font-weight:400;color:#000;white-space:pre;transform:scaleX(1.045);transform-origin:left;">Сумма налога, не удержанная</div><div style="left:886px;top:961.37px;font-size:11.5px;line-height:11.5px;font-weight:400;color:#000;white-space:pre;transform:scaleX(1.045);transform-origin:left;">налоговым агентом</div><div style="left:1313px;top:323px;width:373px;height:34px;background:#a9d08e;"></div><div style="left:1313px;top:409px;width:373px;height:105px;background:#a9d08e;"></div><div style="left:1313px;top:548px;width:373px;height:17px;background:#ffe699;"></div><div style="left:1313px;top:582px;width:373px;height:17px;background:#ffe699;"></div><div style="left:1313px;top:616px;width:373px;height:17px;background:#ffe699;"></div><div style="left:1313px;top:650px;width:373px;height:17px;background:#ffe699;"></div><div style="left:1313px;top:684px;width:373px;height:17px;background:#a9d08e;"></div><div style="left:1313px;top:719px;width:373px;height:204px;background:#a9d08e;"></div><div style="left:1313px;top:940px;width:373px;height:34px;background:#a9d08e;"></div><div style="left:1313px;top:272px;width:373px;height:17px;background:#fff;"></div><div style="left:1313px;top:289px;width:373px;height:34px;background:#fff;"></div><div style="left:1313px;top:357px;width:373px;height:52px;background:#fff;"></div><div style="left:1313px;top:514px;width:373px;height:34px;background:#fff;"></div><div style="left:1313px;top:565px;width:373px;height:17px;background:#fff;"></div><div style="left:1313px;top:599px;width:373px;height:17px;background:#fff;"></div><div style="left:1313px;top:633px;width:373px;height:17px;background:#fff;"></div><div style="left:1313px;top:667px;width:373px;height:17px;background:#fff;"></div><div style="left:1313px;top:701px;width:373px;height:18px;background:#fff;"></div><div style="left:1313px;top:923px;width:373px;height:17px;background:#fff;"></div><div class="dh" style="left:1313px;top:288px;width:373px;height:1px;"></div><div class="dh" style="left:1313px;top:322px;width:373px;height:1px;"></div><div class="dh" style="left:1313px;top:356px;width:373px;height:1px;"></div><div class="dh" style="left:1313px;top:373px;width:373px;height:1px;"></div><div class="dh" style="left:1313px;top:390px;width:373px;height:1px;"></div><div class="dh" style="left:1313px;top:425px;width:373px;height:1px;"></div><div class="dh" style="left:1313px;top:460px;width:373px;height:1px;"></div><div class="dh" style="left:1313px;top:495px;width:373px;height:1px;"></div><div class="dh" style="left:1313px;top:547px;width:373px;height:1px;"></div><div class="dh" style="left:1313px;top:564px;width:373px;height:1px;"></div><div class="dh" style="left:1313px;top:581px;width:373px;height:1px;"></div><div class="dh" style="left:1313px;top:598px;width:373px;height:1px;"></div><div class="dh" style="left:1313px;top:615px;width:373px;height:1px;"></div><div class="dh" style="left:1313px;top:632px;width:373px;height:1px;"></div><div class="dh" style="left:1313px;top:649px;width:373px;height:1px;"></div><div class="dh" style="left:1313px;top:666px;width:373px;height:1px;"></div><div class="dh" style="left:1313px;top:683px;width:373px;height:1px;"></div><div class="dh" style="left:1313px;top:700px;width:373px;height:1px;"></div><div class="dh" style="left:1313px;top:752px;width:373px;height:1px;"></div><div class="dh" style="left:1313px;top:820px;width:373px;height:1px;"></div><div class="dh" style="left:1313px;top:888px;width:373px;height:1px;"></div><div class="dh" style="left:1313px;top:939px;width:373px;height:1px;"></div><div class="dh" style="left:1313px;top:973px;width:373px;height:1px;"></div><div style="left:1312px;top:407px;width:374px;height:2px;background:#000;"></div><div style="left:1312px;top:442px;width:374px;height:2px;background:#000;"></div><div style="left:1312px;top:477px;width:374px;height:2px;background:#000;"></div><div style="left:1312px;top:512px;width:374px;height:2px;background:#000;"></div><div style="left:1312px;top:717px;width:374px;height:2px;background:#000;"></div><div style="left:1312px;top:785px;width:374px;height:2px;background:#000;"></div><div style="left:1312px;top:853px;width:374px;height:2px;background:#000;"></div><div style="left:1312px;top:921px;width:374px;height:2px;background:#000;"></div><div class="dv" style="left:1526px;top:323px;width:1px;height:51px;"></div><div class="dv" style="left:1567px;top:323px;width:1px;height:51px;"></div><div class="dv" style="left:1526px;top:391px;width:1px;height:123px;"></div><div class="dv" style="left:1567px;top:391px;width:1px;height:123px;"></div><div class="dv" style="left:1526px;top:548px;width:1px;height:426px;"></div><div class="dv" style="left:1567px;top:548px;width:1px;height:426px;"></div><div class="dv" style="left:1526px;top:374px;width:1px;height:17px;"></div><div style="left:1311px;top:272px;width:2px;height:702px;background:#000;"></div><div style="left:1684px;top:272px;width:2px;height:702px;background:#000;"></div><div style="left:1312px;top:276.23px;font-size:11.3px;line-height:11.3px;font-weight:700;color:#000;white-space:pre;width:373px;text-align:center;">4 квартал</div><div style="left:1312px;top:301.43px;font-size:11.3px;line-height:11.3px;font-weight:700;color:#000;white-space:pre;width:373px;text-align:center;">Раздел 1</div><div style="left:1312px;top:335.07px;font-size:11.5px;line-height:11.5px;font-weight:400;color:#000;white-space:pre;width:215px;text-align:center;transform:scaleX(1.045);transform-origin:center;">Сумма налога на доходы</div><div style="left:1568px;top:333.67px;font-size:12.2px;line-height:12.2px;font-weight:700;color:#000;white-space:pre;width:118px;text-align:center;">84 706</div><div style="left:1526px;top:377.43px;font-size:11.3px;line-height:11.3px;font-weight:700;color:#000;white-space:pre;width:158px;text-align:center;">Сумма налога</div><div style="left:1568px;top:395.07px;font-size:11.5px;line-height:11.5px;font-weight:400;color:#000;white-space:pre;width:118px;text-align:center;transform:scaleX(1.045);transform-origin:center;">0</div><div style="left:1315px;top:413.07px;font-size:11.5px;line-height:11.5px;font-weight:400;color:#000;white-space:pre;transform:scaleX(1.045);transform-origin:left;">по первому сроку перечисления</div><div style="left:1315px;top:430.07px;font-size:11.5px;line-height:11.5px;font-weight:400;color:#000;white-space:pre;transform:scaleX(1.045);transform-origin:left;">по второму сроку перечисления</div><div style="left:1315px;top:448.07px;font-size:11.5px;line-height:11.5px;font-weight:400;color:#000;white-space:pre;transform:scaleX(1.045);transform-origin:left;">по третьему сроку перечисления</div><div style="left:1315px;top:465.07px;font-size:11.5px;line-height:11.5px;font-weight:400;color:#000;white-space:pre;transform:scaleX(1.045);transform-origin:left;">по четвертому сроку перечисления</div><div style="left:1315px;top:483.07px;font-size:11.5px;line-height:11.5px;font-weight:400;color:#000;white-space:pre;transform:scaleX(1.045);transform-origin:left;">по пятому сроку перечисления</div><div style="left:1315px;top:500.07px;font-size:11.5px;line-height:11.5px;font-weight:400;color:#000;white-space:pre;transform:scaleX(1.045);transform-origin:left;">по шестому сроку перечисления</div><div style="left:1312px;top:525.93px;font-size:11.3px;line-height:11.3px;font-weight:700;color:#000;white-space:pre;width:373px;text-align:center;">Раздел 2</div><div style="left:1315px;top:552.07px;font-size:11.5px;line-height:11.5px;font-weight:400;color:#000;white-space:pre;transform:scaleX(1.045);transform-origin:left;">Сумма дохода получ физ лиц</div><div style="left:1527px;top:552.07px;font-size:11.5px;line-height:11.5px;font-weight:400;color:#000;white-space:pre;width:40px;text-align:center;transform:scaleX(1.045);transform-origin:center;">120</div><div style="left:1568px;top:550.67px;font-size:12.2px;line-height:12.2px;font-weight:700;color:#000;white-space:pre;width:118px;text-align:center;">819 165,20</div><div style="left:1315px;top:586.07px;font-size:11.5px;line-height:11.5px;font-weight:400;color:#000;white-space:pre;transform:scaleX(1.045);transform-origin:left;">Сумма вычетов и расходов</div><div style="left:1568px;top:586.07px;font-size:11.5px;line-height:11.5px;font-weight:400;color:#000;white-space:pre;width:118px;text-align:center;transform:scaleX(1.045);transform-origin:center;">144 000</div><div style="left:1315px;top:619.43px;font-size:11.3px;line-height:11.3px;font-weight:700;color:#000;white-space:pre;">Налоговая база</div><div style="left:1568px;top:618.67px;font-size:12.2px;line-height:12.2px;font-weight:700;color:#000;white-space:pre;width:118px;text-align:center;">675 165,20</div><div style="left:1315px;top:654.07px;font-size:11.5px;line-height:11.5px;font-weight:400;color:#000;white-space:pre;transform:scaleX(1.045);transform-origin:left;">Сумма налога исчисленная</div><div style="left:1568px;top:652.67px;font-size:12.2px;line-height:12.2px;font-weight:700;color:#000;white-space:pre;width:118px;text-align:center;">87 771</div><div style="left:1315px;top:688.07px;font-size:11.5px;line-height:11.5px;font-weight:400;color:#000;white-space:pre;transform:scaleX(1.045);transform-origin:left;">Сумма налога удержанная</div><div style="left:1568px;top:686.67px;font-size:12.2px;line-height:12.2px;font-weight:700;color:#000;white-space:pre;width:118px;text-align:center;">84 706,00</div><div style="left:1568px;top:705.07px;font-size:11.5px;line-height:11.5px;font-weight:400;color:#000;white-space:pre;width:118px;text-align:center;transform:scaleX(1.045);transform-origin:center;">0</div><div style="left:1315px;top:723.07px;font-size:11.5px;line-height:11.5px;font-weight:400;color:#000;white-space:pre;transform:scaleX(1.045);transform-origin:left;">с 1-го по 22-е число первого месяца</div><div style="left:1315px;top:740.37px;font-size:11.5px;line-height:11.5px;font-weight:400;color:#000;white-space:pre;transform:scaleX(1.045);transform-origin:left;">последнего квартала</div><div style="left:1315px;top:757.07px;font-size:11.5px;line-height:11.5px;font-weight:400;color:#000;white-space:pre;transform:scaleX(1.045);transform-origin:left;">с 23-го по последнее число первого</div><div style="left:1315px;top:774.37px;font-size:11.5px;line-height:11.5px;font-weight:400;color:#000;white-space:pre;transform:scaleX(1.045);transform-origin:left;">месяца последнего квартала</div><div style="left:1315px;top:791.07px;font-size:11.5px;line-height:11.5px;font-weight:400;color:#000;white-space:pre;transform:scaleX(1.045);transform-origin:left;">с 1-го по 22-е число второго месяца</div><div style="left:1315px;top:808.37px;font-size:11.5px;line-height:11.5px;font-weight:400;color:#000;white-space:pre;transform:scaleX(1.045);transform-origin:left;">последнего квартала</div><div style="left:1315px;top:825.07px;font-size:11.5px;line-height:11.5px;font-weight:400;color:#000;white-space:pre;transform:scaleX(1.045);transform-origin:left;">с 23-го по последнее число второго</div><div style="left:1315px;top:842.37px;font-size:11.5px;line-height:11.5px;font-weight:400;color:#000;white-space:pre;transform:scaleX(1.045);transform-origin:left;">месяца последнего квартала</div><div style="left:1315px;top:859.07px;font-size:11.5px;line-height:11.5px;font-weight:400;color:#000;white-space:pre;transform:scaleX(1.045);transform-origin:left;">с 1-го числа по 22-е число третьего</div><div style="left:1315px;top:876.37px;font-size:11.5px;line-height:11.5px;font-weight:400;color:#000;white-space:pre;transform:scaleX(1.045);transform-origin:left;">месяца последнего квартала</div><div style="left:1315px;top:893.07px;font-size:11.5px;line-height:11.5px;font-weight:400;color:#000;white-space:pre;transform:scaleX(1.045);transform-origin:left;">с 23-го по последнее число третьего</div><div style="left:1315px;top:910.37px;font-size:11.5px;line-height:11.5px;font-weight:400;color:#000;white-space:pre;transform:scaleX(1.045);transform-origin:left;">месяца последнего квартала</div><div style="left:1315px;top:944.07px;font-size:11.5px;line-height:11.5px;font-weight:400;color:#000;white-space:pre;transform:scaleX(1.045);transform-origin:left;">Сумма налога, не удержанная</div><div style="left:1315px;top:961.37px;font-size:11.5px;line-height:11.5px;font-weight:400;color:#000;white-space:pre;transform:scaleX(1.045);transform-origin:left;">налоговым агентом</div><div style="left:279px;top:648px;width:121px;height:20px;border:2px solid #217346;"></div><div style="left:281px;top:650px;width:117px;height:16px;border:1px solid #fff;"></div><div style="left:394px;top:662px;width:8px;height:8px;background:#fff;"></div><div style="left:395px;top:663px;width:6px;height:6px;background:#217346;"></div><div style="left:1895px;top:255px;width:25px;height:720px;background:#e6e6e6;"></div><div style="left:1898px;top:257px;width:19px;height:19px;background:#fff;border:1px solid #a6a6a6;"></div><svg style="left:1902px;top:262px;" width="11" height="7" viewBox="0 0 11 7"><path d="M0.5 6.5 L5.5 1 L10.5 6.5 Z" fill="#777"/></svg><div style="left:1898px;top:276px;width:19px;height:660px;background:#fff;border:1px solid #a6a6a6;"></div><div style="left:1898px;top:936px;width:19px;height:20px;background:#dadada;"></div><div style="left:1898px;top:956px;width:19px;height:19px;background:#fff;border:1px solid #a6a6a6;"></div><svg style="left:1902px;top:962px;" width="11" height="7" viewBox="0 0 11 7"><path d="M0.5 0.5 L5.5 6 L10.5 0.5 Z" fill="#777"/></svg><div style="left:0px;top:975px;width:1920px;height:28px;background:#e6e6e6;"></div><div style="left:0px;top:974px;width:1895px;height:1px;background:#a0a0a0;"></div><div style="left:0px;top:1003px;width:1920px;height:1px;background:#c8c8c8;"></div><svg style="left:26px;top:983px;" width="10" height="12" viewBox="0 0 10 12"><path d="M8 1 L2 6 L8 11 Z" fill="#c4c4c4"/></svg><svg style="left:55px;top:983px;" width="10" height="12" viewBox="0 0 10 12"><path d="M2 1 L8 6 L2 11 Z" fill="#c4c4c4"/></svg><div style="left:104px;top:978px;width:1px;height:20px;background:#b4b4b4;"></div><div style="left:200.5px;top:978px;width:1px;height:20px;background:#b4b4b4;"></div><div style="left:275px;top:978px;width:1px;height:20px;background:#b4b4b4;"></div><div style="left:331px;top:978px;width:1px;height:20px;background:#b4b4b4;"></div><div style="left:117.4px;top:979.46px;font-size:16px;line-height:16px;font-weight:400;color:#444;white-space:pre;transform:scaleX(1.0827);transform-origin:left;">Кировец</div><div style="left:213px;top:979.46px;font-size:16px;line-height:16px;font-weight:400;color:#444;white-space:pre;transform:scaleX(0.9871);transform-origin:left;">ЕФС-1</div><div style="left:288px;top:979.46px;font-size:16px;line-height:16px;font-weight:400;color:#444;white-space:pre;transform:scaleX(0.8863);transform-origin:left;">РСВ</div><div style="left:345.5px;top:979.46px;font-size:16px;line-height:16px;font-weight:400;color:#444;white-space:pre;transform:scaleX(0.9533);transform-origin:left;">ПЕРСВЕДЕНИЯ</div><div style="left:477px;top:974px;width:93px;height:26px;background:#fff;border:1px solid #c6c6c6;border-top:none;"></div><div style="left:477px;top:998px;width:93px;height:2px;background:#217346;"></div><div style="left:489.8px;top:976.63px;font-size:16.5px;line-height:16.5px;font-weight:700;color:#217346;white-space:pre;transform:scaleX(1.0672);transform-origin:left;">6-НДФЛ</div><svg style="left:602px;top:978px;" width="22" height="22" viewBox="0 0 22 22"><circle cx="11" cy="11" r="9.5" fill="none" stroke="#777" stroke-width="1.3"/><path d="M11 5.5 V16.5 M5.5 11 H16.5" stroke="#777" stroke-width="1.6"/></svg><div style="left:1149px;top:983px;width:3px;height:3px;background:#b4b4b4;"></div><div style="left:1149px;top:987.5px;width:3px;height:3px;background:#b4b4b4;"></div><div style="left:1149px;top:992px;width:3px;height:3px;background:#b4b4b4;"></div><div style="left:1167px;top:978px;width:20px;height:20px;background:#fff;border:1px solid #a6a6a6;"></div><svg style="left:1172px;top:983px;" width="9" height="11" viewBox="0 0 9 11"><path d="M7 0.5 V10.5 L1.5 5.5 Z" fill="#777"/></svg><div style="left:1186px;top:978px;width:652px;height:20px;background:#fff;border:1px solid #a6a6a6;"></div><div style="left:1838px;top:978px;width:38px;height:20px;background:#dadada;"></div><div style="left:1876px;top:978px;width:19px;height:20px;background:#fff;border:1px solid #a6a6a6;"></div><svg style="left:1881px;top:983px;" width="9" height="11" viewBox="0 0 9 11"><path d="M1.5 0.5 V10.5 L7 5.5 Z" fill="#777"/></svg><div style="left:0px;top:1004px;width:1920px;height:26px;background:#f3f2f1;"></div><div style="left:9px;top:1010.57px;font-size:13.5px;line-height:13.5px;font-weight:400;color:#444;white-space:pre;transform:scaleX(0.9979);transform-origin:left;">Готово</div><svg style="left:75px;top:1009px;" width="20" height="18" viewBox="0 0 20 18"><rect x="1" y="1" width="16" height="14" fill="none" stroke="#555" stroke-width="1.3"/><path d="M1 4 H17 M3.5 7 H6 M3.5 10 H6" stroke="#555" stroke-width="1.2"/><circle cx="13" cy="12" r="4.5" fill="#f3f2f1" stroke="#555" stroke-width="1.3"/><circle cx="13" cy="12" r="2" fill="#555"/></svg><div style="left:1544px;top:1004px;width:50px;height:26px;background:#d2d0ce;"></div><svg style="left:1560px;top:1008px;" width="17" height="17" viewBox="0 0 17 17"><rect x="0" y="0" width="17" height="17" rx="1" fill="#5c5c5c"/><rect x="2.3" y="2.3" width="2.6" height="2.6" fill="#e6e6e6"/><rect x="2.3" y="7.1" width="2.6" height="2.6" fill="#e6e6e6"/><rect x="2.3" y="11.899999999999999" width="2.6" height="2.6" fill="#e6e6e6"/><rect x="7.1" y="2.3" width="2.6" height="2.6" fill="#e6e6e6"/><rect x="7.1" y="7.1" width="2.6" height="2.6" fill="#e6e6e6"/><rect x="7.1" y="11.899999999999999" width="2.6" height="2.6" fill="#e6e6e6"/><rect x="11.899999999999999" y="2.3" width="2.6" height="2.6" fill="#e6e6e6"/><rect x="11.899999999999999" y="7.1" width="2.6" height="2.6" fill="#e6e6e6"/><rect x="11.899999999999999" y="11.899999999999999" width="2.6" height="2.6" fill="#e6e6e6"/></svg><svg style="left:1609px;top:1007px;" width="20" height="19" viewBox="0 0 20 19"><rect x="1.8" y="1.8" width="16.2" height="15.4" fill="#fff" stroke="#5c5c5c" stroke-width="1.6"/><rect x="5.5" y="4.5" width="9" height="10" fill="#d8d8d8" stroke="#444" stroke-width="1.5"/><path d="M7.5 8.2 H12.5 M7.5 11 H12.5" stroke="#fff" stroke-width="1"/></svg><svg style="left:1659px;top:1007px;" width="20" height="19" viewBox="0 0 20 19"><rect x="1.8" y="1.8" width="16.2" height="15.4" fill="#fff" stroke="#5c5c5c" stroke-width="1.6"/><path d="M12 1.8 V10 H1.8 M6.6 1.8 V10" fill="none" stroke="#5c5c5c" stroke-width="1.6"/></svg><div style="left:1701px;top:1016px;width:9.5px;height:1.3px;background:#555;"></div><div style="left:1716.5px;top:1017px;width:125px;height:1px;background:#999;"></div><div style="left:1779px;top:1013px;width:1px;height:8px;background:#999;"></div><div style="left:1757px;top:1010px;width:6px;height:14px;background:#666;"></div><div style="left:1848px;top:1016px;width:10px;height:1.3px;background:#555;"></div><div style="left:1852.3px;top:1011.7px;width:1.3px;height:10px;background:#555;"></div><div style="left:1874.5px;top:1010.15px;font-size:14px;line-height:14px;font-weight:400;color:#444;white-space:pre;transform:scaleX(0.8615);transform-origin:left;">70 %</div><div style="left:0px;top:1030px;width:1920px;height:50px;background:linear-gradient(90deg,#dad7d3 0%,#dbd6d5 3%,#ded3d6 22%,#ded3d6 82%,#dcdbd3 89%,#ddd7d4 95%,#ded4d6 100%);"></div><svg style="left:20px;top:1045px;" width="21" height="21" viewBox="0 0 21 21"><g fill="#111"><path d="M0 2.8 L8.5 1.6 V9.6 H0 Z"/><path d="M9.6 1.5 L20.5 0 V9.6 H9.6 Z"/><path d="M0 10.6 H8.5 V18.6 L0 17.4 Z"/><path d="M9.6 10.6 H20.5 V20.2 L9.6 18.7 Z"/></g></svg><div style="left:60px;top:1030px;width:360px;height:50px;background:#fff;border:1px solid #c8c8c8;"></div><svg style="left:73px;top:1044px;" width="24" height="22" viewBox="0 0 24 22"><g fill="none" stroke="#222" stroke-width="1.6"><circle cx="14.5" cy="8" r="6"/><path d="M10.3 12.3 L2.5 20"/></g></svg><div style="left:111px;top:1047.26px;font-size:18px;line-height:18px;font-weight:400;color:#222;white-space:pre;transform:scaleX(1.0683);transform-origin:left;">Поиск</div><svg style="left:328px;top:1037px;" width="80" height="42" viewBox="0 0 80 42"><path d="M34 4 C35.5 13 38 15.5 47 17 C38 18.5 35.5 21 34 30 C32.5 21 30 18.5 21 17 C30 15.5 32.5 13 34 4 Z" fill="#f6c21a"/><path d="M54 19 C54.6 23 55.8 24.2 60 25 C55.8 25.8 54.6 27 54 31 C53.4 27 52.2 25.8 48 25 C52.2 24.2 53.4 23 54 19 Z" fill="#f6c21a"/><path d="M4 25 L7 27 L10 24.5 L9 28.5 L11.5 31 L8 31 L6.5 34.5 L5.5 31 L2 30 L5 28 Z" fill="#1e9be0"/><circle cx="53" cy="5.5" r="2.2" fill="#f2592a"/><circle cx="76" cy="29" r="2.2" fill="#7ac142"/></svg><svg style="left:438.0px;top:1039px;" width="32" height="32" viewBox="0 0 32 32"><circle cx="16" cy="16" r="15" fill="#111"/><path d="M17 7 V19.5 A3.8 3.8 0 1 1 13.2 15.7 M17 7 C17.5 10 19.5 11.5 22 11.7" fill="none" stroke="#fff" stroke-width="2.6"/><path d="M16 8 V20.5 A3.8 3.8 0 1 1 12.2 16.7" fill="none" stroke="#25f4ee" stroke-width="1" opacity=".6"/></svg><svg style="left:500.0px;top:1039px;" width="32" height="32" viewBox="0 0 32 32"><path d="M16 2 L29 10 L26 27 H6 L3 10 Z" fill="#fff" stroke="#8fb8e0" stroke-width="1"/><path d="M22 10 A8 8 0 1 0 22 22" fill="none" stroke="#e8403a" stroke-width="2.5"/><path d="M19 13 A4 4 0 1 0 19 19" fill="none" stroke="#e8403a" stroke-width="2"/><path d="M25 16 L20 13 V19 Z" fill="#e8403a"/></svg><svg style="left:562.0px;top:1039px;" width="32" height="32" viewBox="0 0 32 32"><rect x="1" y="1" width="30" height="30" fill="#0f1418"/><rect x="8" y="7" width="12" height="9" fill="none" stroke="#3ec1f3" stroke-width="1.5"/><path d="M20 10 L24 8 V15 L20 13" fill="none" stroke="#3ec1f3" stroke-width="1.5"/><rect x="7" y="23" width="18" height="1.5" fill="#666"/><rect x="6" y="26" width="20" height="1" fill="#555"/></svg><svg style="left:627px;top:1039px;" width="26" height="32" viewBox="0 0 26 32"><rect x="1" y="1" width="23" height="30" rx="1.5" fill="#6b7a88"/><rect x="3.5" y="3.5" width="18" height="5" fill="#3cc7f0"/><g fill="#d9dee4"><rect x="3.5" y="10.5" width="5" height="5"/><rect x="10" y="10.5" width="5" height="5"/><rect x="16.5" y="10.5" width="5" height="5"/><rect x="3.5" y="17" width="5" height="5"/><rect x="10" y="17" width="5" height="5"/><rect x="3.5" y="23.5" width="5" height="5"/><rect x="10" y="23.5" width="5" height="5"/></g><rect x="16.5" y="17" width="5" height="11.5" fill="#1d4f9c"/></svg><svg style="left:686.0px;top:1039px;" width="32" height="32" viewBox="0 0 32 32"><rect x="1" y="3" width="30" height="27" rx="4" fill="#fbb93a"/><path d="M1 8 L16 19 L31 8 V7 C31 5 29 3 27 3 H5 C3 3 1 5 1 7 Z" fill="#f2592a"/><path d="M1 30 L13 17 M31 30 L19 17" stroke="#f7d36b" stroke-width="1"/></svg><svg style="left:748.0px;top:1039px;" width="32" height="32" viewBox="0 0 32 32"><circle cx="16" cy="16" r="15" fill="#fff"/><path d="M9 7 L16 17 V26 M23 7 L16 17" fill="none" stroke="#f33" stroke-width="3.2"/><path d="M23 7 L16 17" stroke="#e05ad8" stroke-width="3.2"/></svg><svg style="left:810.0px;top:1039px;" width="32" height="32" viewBox="0 0 32 32"><rect x="2" y="3" width="28" height="27" fill="#7a2a7a"/><rect x="2" y="3" width="28" height="8" fill="#c0302e"/><rect x="2" y="12" width="28" height="8" fill="#3750b5"/><rect x="2" y="21" width="28" height="9" fill="#2e8a3a"/><rect x="12" y="1" width="8" height="30" fill="#b58a4a"/><rect x="11" y="13" width="10" height="7" fill="#ddd" stroke="#333"/></svg><svg style="left:870px;top:1038px;" width="36" height="36" viewBox="0 0 36 36"><circle cx="18" cy="17" r="13.4" fill="none" stroke="#1e8a4e" stroke-width="3"/><path d="M6.5 24 L3.2 32 L12 29.3 Z" fill="#1e8a4e"/><path d="M12.2 12.5 C13 18.5 18 22.5 23.5 22.7" fill="none" stroke="#1e8a4e" stroke-width="3.2" stroke-linecap="round"/><ellipse cx="11.8" cy="11.7" rx="2.2" ry="2.6" fill="#1e8a4e"/><ellipse cx="24" cy="22.2" rx="2.8" ry="2.1" fill="#1e8a4e"/></svg><svg style="left:934.0px;top:1039px;" width="32" height="32" viewBox="0 0 32 32"><path d="M2 6 H12 L14 8 H30 V28 H2 Z" fill="#f5b700"/><rect x="2" y="10" width="28" height="18" fill="#ffd34e"/><rect x="9" y="19" width="14" height="9" fill="#1f6fc5"/><rect x="12" y="22" width="8" height="6" fill="#ffd34e"/></svg><div style="left:925px;top:1077px;width:51px;height:3px;background:#1f6fc5;"></div><svg style="left:996.0px;top:1039px;" width="32" height="32" viewBox="0 0 32 32"><circle cx="16" cy="16" r="15" fill="#1f8ad6"/><path d="M30 17 C30 9 24 2 16 2 C9 2 3 7 2 14 C4 9 9 7 14 7 C21 7 26 11 26 16 C26 18 24 19 21 19 H12 C12 24 16 27 21 27 C25 27 28 25 30 22 Z" fill="#52c558"/><path d="M2 14 C1 22 7 30 16 30 C21 30 26 27 28 23 C24 26 18 26 14 23 C10 20 9 15 11 12 C6 12 3 13 2 14 Z" fill="#1358b8"/></svg><svg style="left:1057.0px;top:1039px;" width="32" height="32" viewBox="0 0 32 32"><circle cx="16" cy="16" r="15" fill="#2aa3de"/><path d="M7 15.5 L23.5 9 L21 23 L16 19.5 L13.5 22 L13 18 L21 11 L11.5 17 Z" fill="#fff"/></svg><svg style="left:1119.0px;top:1039px;" width="32" height="32" viewBox="0 0 32 32"><circle cx="16" cy="16" r="14" fill="#fff"/><path d="M25 9 A11 11 0 1 0 25 23" fill="none" stroke="#2a3a8c" stroke-width="4"/><circle cx="16" cy="16" r="3.5" fill="#e31f4f"/></svg><svg style="left:1182.0px;top:1039px;" width="32" height="32" viewBox="0 0 32 32"><circle cx="16" cy="16" r="15" fill="#db4437"/><path d="M16 16 L29 9.5 A15 15 0 0 1 16 31 Z" fill="#fbbc05"/><path d="M16 16 L16 31 A15 15 0 0 1 3 8.5 Z" fill="#0f9d58"/><circle cx="16" cy="16" r="6.8" fill="#fff"/><circle cx="16" cy="16" r="5.4" fill="#4285f4"/></svg><svg style="left:1243.0px;top:1039px;" width="32" height="32" viewBox="0 0 32 32"><ellipse cx="16" cy="18" rx="12" ry="13" fill="#9a6a3e"/><path d="M5 4 L10 8 M27 4 L22 8" stroke="#7a4a2a" stroke-width="3"/><circle cx="11" cy="14" r="5" fill="#f6e7b8"/><circle cx="21" cy="14" r="5" fill="#f6e7b8"/><circle cx="11" cy="14" r="2" fill="#222"/><circle cx="21" cy="14" r="2" fill="#222"/><path d="M14.5 18 L16 21 L17.5 18 Z" fill="#f2a51a"/><ellipse cx="16" cy="25" rx="6" ry="4" fill="#d8b48a"/></svg><svg style="left:1305.7px;top:1039px;" width="32" height="32" viewBox="0 0 32 32"><circle cx="16" cy="16" r="15" fill="#fc3f1d"/><text x="9.5" y="24" font-family="Liberation Sans" font-weight="700" font-size="20" fill="#fff">Я</text></svg><svg style="left:1367.3px;top:1039px;" width="32" height="32" viewBox="0 0 32 32"><circle cx="16" cy="16" r="15" fill="#f8f4f6"/><path d="M8 8 L16 17 L26 6" fill="none" stroke="#ff5b3a" stroke-width="2.6"/><path d="M16 17 L20 12" stroke="#ff5b3a" stroke-width="2.6"/><circle cx="22" cy="24" r="6.5" fill="#e9e9e9" stroke="#bbb"/><circle cx="22" cy="24" r="2.5" fill="#333"/></svg><div style="left:1359px;top:1077px;width:39px;height:3px;background:#1f6fc5;"></div><div style="left:1398px;top:1077px;width:12px;height:3px;background:#6aa6e0;"></div><svg style="left:1429.7px;top:1039px;" width="32" height="32" viewBox="0 0 32 32"><circle cx="16" cy="16" r="15" fill="#8cb2f6"/><path d="M4.5 22 C3.5 15 12 9 20 9.5 C25 10 28 12.5 27 15.5 C26 19 14 24 4.5 22 Z" fill="#1a5fe6" transform="rotate(-12 16 16)"/><ellipse cx="17.5" cy="19.5" rx="5.5" ry="2.3" fill="#fff" transform="rotate(-18 17.5 19.5)"/></svg><svg style="left:1491.7px;top:1039px;" width="32" height="32" viewBox="0 0 32 32"><circle cx="16" cy="16" r="15" fill="#f7d44a"/><text x="4" y="21" font-family="Liberation Sans" font-weight="700" font-size="13" fill="#e03a2a">1C</text><circle cx="24" cy="23" r="8" fill="#e8262d" stroke="#fff" stroke-width="1.2"/><text x="21" y="28" font-family="Liberation Sans" font-weight="700" font-size="12" fill="#fff">1</text></svg><div style="left:1483px;top:1077px;width:50px;height:3px;background:#1f6fc5;"></div><div style="left:1539px;top:1030px;width:60px;height:50px;background:#efe9eb;"></div><div style="left:1539px;top:1077px;width:60px;height:3px;background:#1f6fc5;"></div><svg style="left:1553px;top:1040px;" width="32" height="32" viewBox="0 0 32 32"><rect x="9" y="2" width="21" height="27" rx="2" fill="#21a366"/><rect x="9" y="2" width="21" height="9" fill="#33c481"/><rect x="19" y="11" width="11" height="9" fill="#107c41"/><rect x="9" y="20" width="21" height="9" fill="#185c37"/><rect x="2" y="7.5" width="16" height="16" rx="1.5" fill="#107c41"/><text x="5" y="20.5" font-family="Liberation Sans" font-weight="700" font-size="12" fill="#fff">X</text></svg><svg style="left:1608px;top:1047px;" width="20" height="14" viewBox="0 0 20 14"><path d="M2 11 L10 3 L18 11" fill="none" stroke="#222" stroke-width="1.5"/></svg><svg style="left:1637px;top:1047px;" width="22" height="14" viewBox="0 0 22 14"><rect x="1.5" y="2" width="17" height="10" fill="none" stroke="#222" stroke-width="1.4"/><rect x="19" y="5" width="2" height="4" fill="#222"/><rect x="3.5" y="4" width="5" height="6" fill="#222"/></svg><svg style="left:1668px;top:1043px;" width="22" height="20" viewBox="0 0 22 20"><g fill="none" stroke="#222" stroke-width="1.5"><path d="M2 18 A16 16 0 0 1 18 2"/><path d="M6 18 A12 12 0 0 1 18 6"/><path d="M10 18 A8 8 0 0 1 18 10"/><path d="M14 18 A4 4 0 0 1 18 14"/></g><circle cx="18" cy="18" r="1.5" fill="#222"/></svg><svg style="left:1696px;top:1044px;" width="24" height="22" viewBox="0 0 24 22"><path d="M2 8 H6 L11 3 V19 L6 14 H2 Z" fill="none" stroke="#222" stroke-width="1.4"/><path d="M14 8 C15.5 9.5 15.5 12.5 14 14 M17 5.5 C20 8.5 20 13.5 17 16.5" fill="none" stroke="#222" stroke-width="1.4"/><path d="M20 3 C24 7 24 15 20 19" fill="none" stroke="#999" stroke-width="1.4"/></svg><div style="left:1731.7px;top:1048.73px;font-size:14.5px;line-height:14.5px;font-weight:400;color:#222;white-space:pre;transform:scaleX(0.9158);transform-origin:left;">РУС</div><div style="left:1793.3px;top:1036.73px;font-size:14.5px;line-height:14.5px;font-weight:400;color:#222;white-space:pre;transform:scaleX(0.9477);transform-origin:left;">19:00</div><div style="left:1776px;top:1059.73px;font-size:14.5px;line-height:14.5px;font-weight:400;color:#222;white-space:pre;transform:scaleX(0.9603);transform-origin:left;">31.10.2025</div><svg style="left:1866px;top:1043px;" width="25" height="23" viewBox="0 0 25 23"><path d="M2 2 H23 V17 H14 L11 21 L11 17 H2 Z" fill="none" stroke="#222" stroke-width="1.4"/></svg><div style="left:1912px;top:1030px;width:1px;height:50px;background:#b8aeb1;"></div></body></html>
